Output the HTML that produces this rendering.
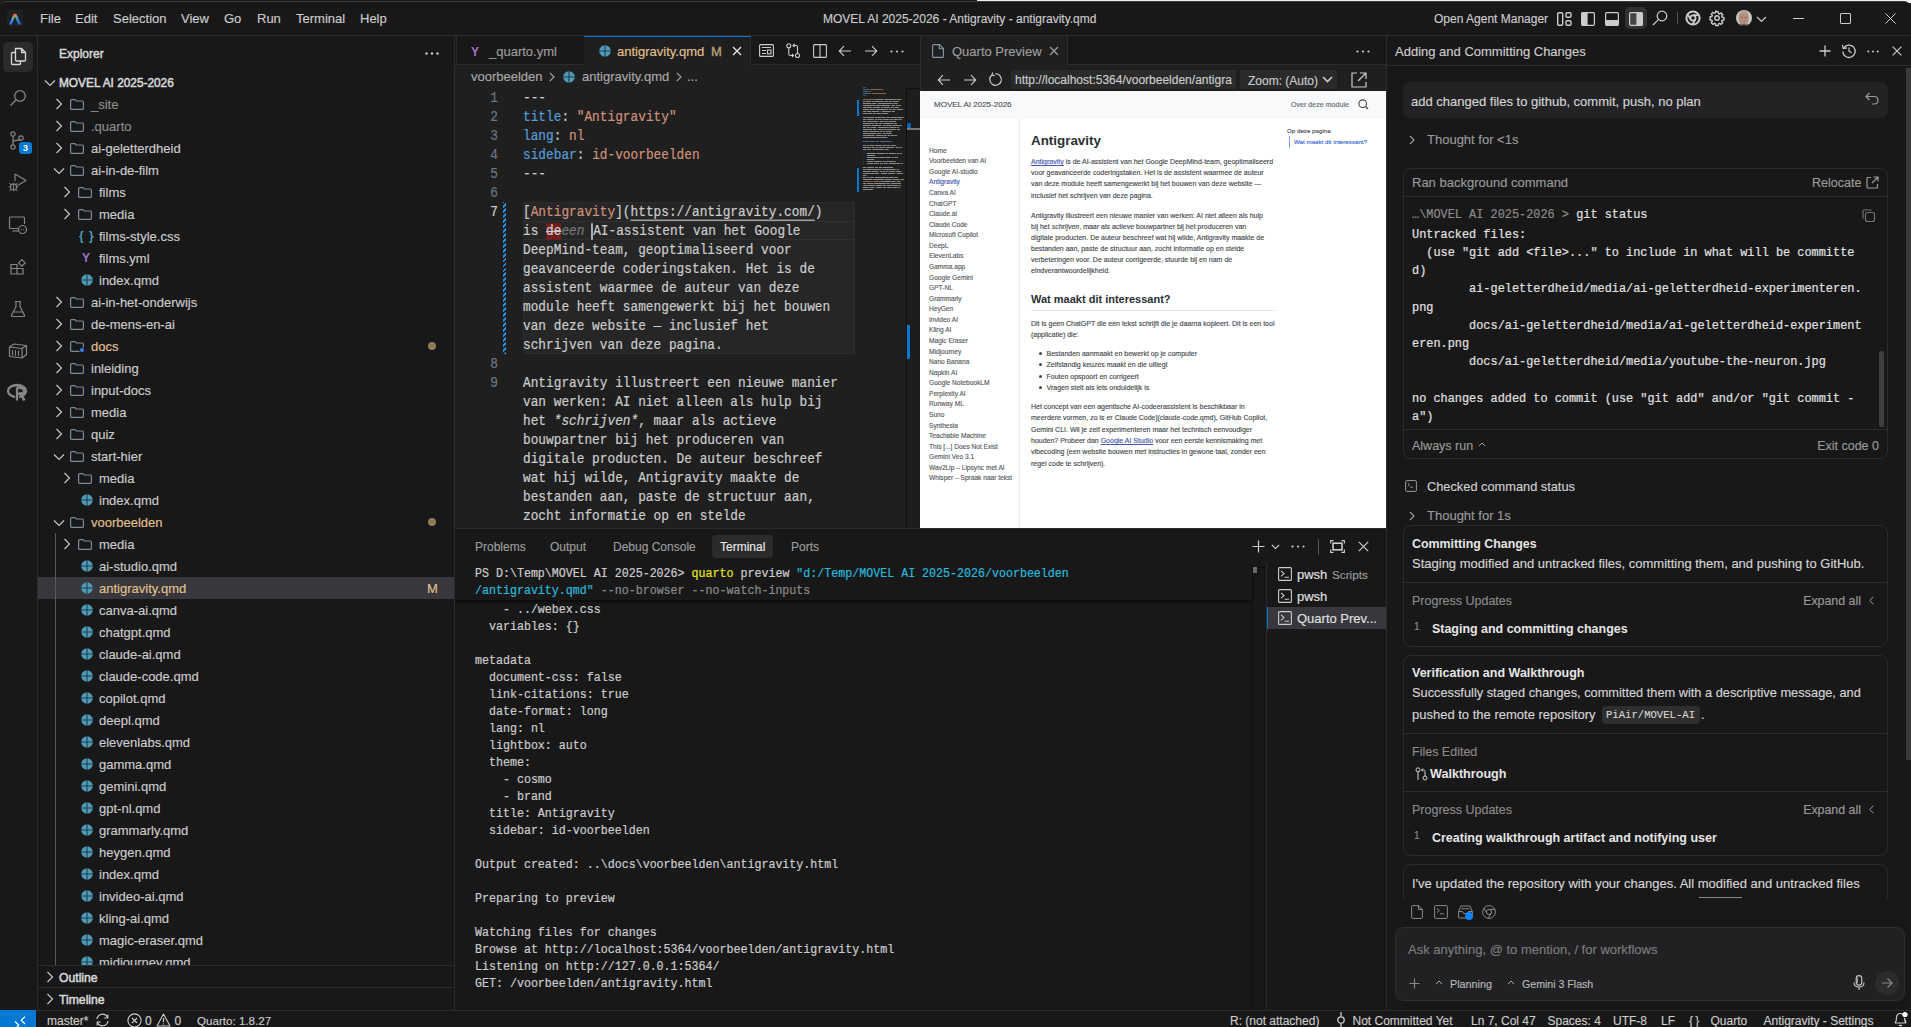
<!DOCTYPE html>
<html><head><meta charset="utf-8">
<style>
*{box-sizing:border-box;margin:0;padding:0}
html,body{width:1911px;height:1027px;overflow:hidden;background:#181818}
body{font-family:"Liberation Sans",sans-serif;font-size:13px;color:#cccccc;position:relative}
.a{position:absolute}
.t{position:absolute;white-space:pre;line-height:16px;-webkit-text-stroke:0.15px currentColor}
.mono{font-family:"Liberation Mono",monospace}
svg{position:absolute;overflow:visible}
.t[style*="font-weight:bold"]{-webkit-text-stroke:0}
</style></head><body>
<!-- top strip behind window -->
<div class="a" style="left:0;top:0;width:977px;height:3px;background:#1b1913"></div>
<div class="a" style="left:977px;top:0;width:934px;height:3px;background:#f0f0f0"></div>
<div class="a" style="left:0;top:1px;width:1911px;height:1026px;background:#181818;border-radius:5px 7px 0 0;border-top:1px solid #3d3c38"></div>

<!-- TITLE BAR -->
<div id="titlebar" class="a" style="left:0;top:3px;width:1911px;height:32px">
<div class="a" style="left:7px;top:7px;width:16px;height:16px;background:#202125"></div>
<svg style="left:7px;top:7px" width="16" height="16" viewBox="0 0 16 16"><defs><linearGradient id="lg" x1="0.3" y1="0" x2="0.5" y2="1"><stop offset="0.1" stop-color="#e8683a"/><stop offset="0.28" stop-color="#8fb04e"/><stop offset="0.5" stop-color="#3d90f8"/><stop offset="1" stop-color="#3170d8"/></linearGradient></defs><path d="M3.6 13.4 C5.2 11 6 8.2 6.9 5.9 C7.5 4.2 8.5 4.2 9.1 5.9 C10 8.2 10.8 11 12.4 13.4" fill="none" stroke="url(#lg)" stroke-width="2.5" stroke-linecap="round"/></svg>
<div class="t" style="left:40px;top:8px;color:#cccccc">File</div>
<div class="t" style="left:75px;top:8px;color:#cccccc">Edit</div>
<div class="t" style="left:113px;top:8px;color:#cccccc">Selection</div>
<div class="t" style="left:181px;top:8px;color:#cccccc">View</div>
<div class="t" style="left:224px;top:8px;color:#cccccc">Go</div>
<div class="t" style="left:257px;top:8px;color:#cccccc">Run</div>
<div class="t" style="left:296px;top:8px;color:#cccccc">Terminal</div>
<div class="t" style="left:360px;top:8px;color:#cccccc">Help</div>
<div class="t" style="left:823px;top:8px;color:#cccccc;font-size:12px;letter-spacing:0px">MOVEL AI 2025-2026 - Antigravity - antigravity.qmd</div>
<div class="t" style="left:1434px;top:8px;color:#cccccc;font-size:12px">Open Agent Manager</div>
<svg style="left:1557px;top:9px" width="15" height="14" viewBox="0 0 15 14"><rect x="0.7" y="0.7" width="5" height="12.6" rx="1.2" fill="none" stroke="#ccc" stroke-width="1.4"/><rect x="9" y="0.7" width="5" height="4.6" rx="1.2" fill="none" stroke="#ccc" stroke-width="1.4"/><rect x="9" y="8.7" width="5" height="4.6" rx="1.2" fill="none" stroke="#ccc" stroke-width="1.4"/></svg>
<svg style="left:1581px;top:9px" width="14" height="14" viewBox="0 0 14 14"><rect x="0.6" y="0.6" width="12.8" height="12.8" rx="1.2" fill="none" stroke="#ccc" stroke-width="1.2"/><rect x="0.6" y="0.6" width="6" height="12.8" fill="#ccc"/></svg>
<svg style="left:1605px;top:9px" width="14" height="14" viewBox="0 0 14 14"><rect x="0.6" y="0.6" width="12.8" height="12.8" rx="1.2" fill="none" stroke="#ccc" stroke-width="1.2"/><rect x="0.6" y="8" width="12.8" height="5.4" fill="#ccc"/></svg>
<div class="a" style="left:1625px;top:4px;width:22px;height:22px;border-radius:5px;background:#313131"></div>
<svg style="left:1629px;top:9px" width="14" height="14" viewBox="0 0 14 14"><rect x="0.6" y="0.6" width="12.8" height="12.8" rx="1.2" fill="#444" stroke="#ccc" stroke-width="1.2"/><rect x="7.4" y="0.6" width="6" height="12.8" fill="#ccc"/></svg>
<svg style="left:1652px;top:7px" width="16" height="16" viewBox="0 0 16 16"><circle cx="10" cy="6" r="4.8" fill="none" stroke="#ccc" stroke-width="1.2"/><path d="M6.6 9.4 L1 15" stroke="#ccc" stroke-width="1.3"/></svg>
<div class="a" style="left:1677px;top:9px;width:1px;height:12px;background:#555"></div>
<svg style="left:1685px;top:7px" width="16" height="16" viewBox="0 0 16 16"><circle cx="8" cy="8" r="6.6" fill="none" stroke="#ccc" stroke-width="2"/><circle cx="8" cy="8" r="2.6" fill="none" stroke="#ccc" stroke-width="1.7"/><path d="M8 5.2 H14.4 M5.6 9.4 L2.4 3.9 M10.4 9.4 L7.2 14.9" stroke="#ccc" stroke-width="1.8"/></svg>
<svg style="left:1709px;top:7px" width="16" height="16" viewBox="0 0 16 16"><path d="M8 1.5l1.2.3.3 1.7 1.1.5 1.4-1 1.7 1.7-1 1.4.5 1.1 1.7.3v2.4l-1.7.3-.5 1.1 1 1.4-1.7 1.7-1.4-1-1.1.5-.3 1.7H6.8l-.3-1.7-1.1-.5-1.4 1-1.7-1.7 1-1.4-.5-1.1-1.7-.3V6.8l1.7-.3.5-1.1-1-1.4 1.7-1.7 1.4 1 1.1-.5.3-1.7z" fill="none" stroke="#ccc" stroke-width="1.4"/><circle cx="8" cy="8" r="2.2" fill="none" stroke="#ccc" stroke-width="1.4"/></svg>
<svg style="left:1736px;top:7px" width="16" height="16" viewBox="0 0 16 16"><defs><clipPath id="avc"><circle cx="8" cy="8" r="8"/></clipPath></defs><g clip-path="url(#avc)"><rect width="16" height="16" fill="#c3cbc3"/><ellipse cx="7.6" cy="8.6" rx="5.2" ry="7.4" fill="#b58f7e"/><path d="M3 5 Q4 0.5 8 0.6 Q12 0.5 12.6 5 Q11 2.6 8 2.8 Q5 2.6 3 5Z" fill="#a9a49c"/><path d="M4.8 7.6 H6.8 M8.6 7.6 H10.6" stroke="#6e5446" stroke-width="0.9"/><path d="M6.8 12.2 H9" stroke="#9a6a66" stroke-width="0.8"/><rect x="3" y="14.5" width="10" height="2" fill="#2c2a2a"/></g></svg>
<svg style="left:1756px;top:13px" width="11" height="7" viewBox="0 0 11 7"><path d="M1 1 L5.5 5.5 L10 1" fill="none" stroke="#ccc" stroke-width="1.2"/></svg>
<div class="a" style="left:1793px;top:15px;width:11px;height:1px;background:#ccc"></div>
<div class="a" style="left:1840px;top:10px;width:11px;height:11px;border:1px solid #ccc;border-radius:1px"></div>
<svg style="left:1885px;top:10px" width="11" height="11" viewBox="0 0 11 11"><path d="M0.5 0.5 L10.5 10.5 M10.5 0.5 L0.5 10.5" stroke="#ccc" stroke-width="1"/></svg>
</div>
<div class="a" style="left:0;top:35px;width:1911px;height:1px;background:#2b2b2b"></div>

<!-- ACTIVITY BAR -->
<div id="activity" class="a" style="left:0;top:36px;width:38px;height:974px;background:#181818;border-right:1px solid #2b2b2b">
<div class="a" style="left:3px;top:6px;width:30px;height:30px;border-radius:5px;background:#2b2b2b"></div>
<svg style="left:9px;top:11px" width="19" height="19" viewBox="0 0 19 19"><path d="M6.5 1.5 H12.5 L16.5 5.5 V13 Q16.5 14 15.5 14 H7.5 Q6.5 14 6.5 13 Z M12.5 1.5 V5.5 H16.5" fill="none" stroke="#d7d7d7" stroke-width="1.3" stroke-linejoin="round"/><path d="M6.5 5.5 H3.5 Q2.5 5.5 2.5 6.5 V16.5 Q2.5 17.5 3.5 17.5 H10.5 Q11.5 17.5 11.5 16.5 V14" fill="none" stroke="#d7d7d7" stroke-width="1.3"/></svg>
<svg style="left:9px;top:53px" width="18" height="18" viewBox="0 0 18 18"><circle cx="11" cy="7" r="5.3" fill="none" stroke="#858585" stroke-width="1.3"/><path d="M7.2 10.8 L1.5 16.5" stroke="#858585" stroke-width="1.4"/></svg>
<svg style="left:9px;top:95px" width="18" height="20" viewBox="0 0 18 20"><circle cx="4" cy="3" r="2.2" fill="none" stroke="#858585" stroke-width="1.2"/><circle cx="4" cy="16" r="2.2" fill="none" stroke="#858585" stroke-width="1.2"/><circle cx="12" cy="7" r="2.2" fill="none" stroke="#858585" stroke-width="1.2"/><path d="M4 5.2 V13.8 M4 12 Q4 9.5 7 9.3 Q11.5 9.2 12 9.2" fill="none" stroke="#858585" stroke-width="1.2"/></svg>
<div class="a" style="left:19px;top:106px;width:13px;height:12px;border-radius:3px;background:#0078d4;color:#fff;font-size:9.5px;font-weight:bold;line-height:12px;text-align:center">3</div>
<svg style="left:8px;top:136px" width="20" height="20" viewBox="0 0 20 20"><path d="M7 2 L18 8.5 L9.5 13.5" fill="none" stroke="#858585" stroke-width="1.2" stroke-linejoin="round"/><path d="M7 2 V9" stroke="#858585" stroke-width="1.2"/><ellipse cx="5.5" cy="15" rx="3" ry="3.2" fill="none" stroke="#858585" stroke-width="1.2"/><path d="M2.5 15 H0.8 M8.5 15 H10.2 M3 12.5 L1.3 11.3 M8 12.5 L9.7 11.3 M3 17.5 L1.3 18.8 M8 17.5 L9.7 18.8 M5.5 12 V18" stroke="#858585" stroke-width="1"/></svg>
<svg style="left:8px;top:179px" width="20" height="20" viewBox="0 0 20 20"><path d="M11 13.5 H2.5 Q1.5 13.5 1.5 12.5 V3 Q1.5 2 2.5 2 H15.5 Q16.5 2 16.5 3 V9" fill="none" stroke="#858585" stroke-width="1.2"/><path d="M4.5 16 H10" stroke="#858585" stroke-width="1.2"/><circle cx="14.5" cy="14.5" r="4" fill="#181818" stroke="#858585" stroke-width="1.2"/><path d="M12.8 15.2 L14 13.8 M15 15.2 L16.2 13.8" stroke="#858585" stroke-width="0.9"/></svg>
<svg style="left:9px;top:222px" width="18" height="18" viewBox="0 0 18 18"><path d="M2 6.5 H8 V16 H2 Z M8 10.5 H14 V16 H8 Z M2 10.5 H8" fill="none" stroke="#858585" stroke-width="1.2"/><path d="M9.6 4.9 L12.9 1.6 L16.2 4.9 L12.9 8.2 Z" fill="none" stroke="#858585" stroke-width="1.2"/></svg>
<svg style="left:9px;top:264px" width="18" height="18" viewBox="0 0 18 18"><path d="M6 1.5 H12 M7 1.5 V6.5 L2.5 15.2 Q2.2 16.5 3.5 16.5 H14.5 Q15.8 16.5 15.5 15.2 L11 6.5 V1.5 M4.3 12 H13.7" fill="none" stroke="#858585" stroke-width="1.2" stroke-linejoin="round"/></svg>
<svg style="left:8px;top:306px" width="20" height="18" viewBox="0 0 20 18"><path d="M1.5 5 L6 2 L18.5 3.5 V12.5 L14 16 L1.5 14.5 Z M1.5 5 L14 6.5 L18.5 3.5 M14 6.5 V16" fill="none" stroke="#858585" stroke-width="1.2" stroke-linejoin="round"/><path d="M4.5 8 V13.5 M7.5 8.3 V13.8 M10.5 8.6 V14.2" stroke="#858585" stroke-width="1.1"/></svg>
<svg style="left:7px;top:347px" width="22" height="18" viewBox="0 0 22 18"><ellipse cx="10" cy="8" rx="9" ry="6" fill="none" stroke="#858585" stroke-width="2.4"/><path d="M8.5 5 H14 Q17 5 17 8 Q17 10.5 14 10.5 H10.5 M10.5 5 V17 M13.5 10.5 L17 17" fill="none" stroke="#858585" stroke-width="2.4"/><rect x="8" y="4" width="4" height="14" fill="#181818"/><path d="M10 4.5 V17.5 M10 4.5 H14.5 Q17.5 4.5 17.5 7.7 Q17.5 10.8 14.5 10.8 H10 M13.8 10.8 L17.5 17.5" fill="none" stroke="#858585" stroke-width="2.3"/></svg>
</div>
<!-- SIDEBAR -->
<div id="sidebar" class="a" style="left:38px;top:36px;width:417px;height:974px;background:#181818;border-right:1px solid #2b2b2b;overflow:hidden">
<div class="t" style="left:21px;top:10px;color:#d8d8d8;font-size:12px;-webkit-text-stroke:0.45px currentColor">Explorer</div>
<svg style="left:387px;top:16px" width="14" height="3" viewBox="0 0 14 3"><circle cx="1.5" cy="1.5" r="1.2" fill="#ccc"/><circle cx="7" cy="1.5" r="1.2" fill="#ccc"/><circle cx="12.5" cy="1.5" r="1.2" fill="#ccc"/></svg>
<svg style="left:6px;top:43px" width="12" height="8" viewBox="0 0 12 8"><path d="M1 1.5 L6 6.5 L11 1.5" fill="none" stroke="#c5c5c5" stroke-width="1.2"/></svg>
<div class="t" style="left:21px;top:39px;color:#d8d8d8;font-size:11.85px;-webkit-text-stroke:0.5px currentColor;transform:scaleY(1.06)">MOVEL AI 2025-2026</div>
<svg style="left:17px;top:62px" width="8" height="12" viewBox="0 0 8 12"><path d="M1.5 1 L6.5 6 L1.5 11" fill="none" stroke="#c5c5c5" stroke-width="1.2"/></svg>
<svg style="left:32px;top:63px" width="14" height="11" viewBox="0 0 14 11"><path d="M0.6 1.6 Q0.6 0.6 1.6 0.6 H5 L6.3 2 H12.4 Q13.4 2 13.4 3 V9.4 Q13.4 10.4 12.4 10.4 H1.6 Q0.6 10.4 0.6 9.4 Z" fill="none" stroke="#7d8898" stroke-width="1.2" stroke-linejoin="round"/></svg>
<div class="t" style="left:53px;top:61px;color:#8c8c8c;">_site</div>
<svg style="left:17px;top:84px" width="8" height="12" viewBox="0 0 8 12"><path d="M1.5 1 L6.5 6 L1.5 11" fill="none" stroke="#c5c5c5" stroke-width="1.2"/></svg>
<svg style="left:32px;top:85px" width="14" height="11" viewBox="0 0 14 11"><path d="M0.6 1.6 Q0.6 0.6 1.6 0.6 H5 L6.3 2 H12.4 Q13.4 2 13.4 3 V9.4 Q13.4 10.4 12.4 10.4 H1.6 Q0.6 10.4 0.6 9.4 Z" fill="none" stroke="#7d8898" stroke-width="1.2" stroke-linejoin="round"/></svg>
<div class="t" style="left:53px;top:83px;color:#8c8c8c;">.quarto</div>
<svg style="left:17px;top:106px" width="8" height="12" viewBox="0 0 8 12"><path d="M1.5 1 L6.5 6 L1.5 11" fill="none" stroke="#c5c5c5" stroke-width="1.2"/></svg>
<svg style="left:32px;top:107px" width="14" height="11" viewBox="0 0 14 11"><path d="M0.6 1.6 Q0.6 0.6 1.6 0.6 H5 L6.3 2 H12.4 Q13.4 2 13.4 3 V9.4 Q13.4 10.4 12.4 10.4 H1.6 Q0.6 10.4 0.6 9.4 Z" fill="none" stroke="#7d8898" stroke-width="1.2" stroke-linejoin="round"/></svg>
<div class="t" style="left:53px;top:105px;color:#cccccc;">ai-geletterdheid</div>
<svg style="left:15px;top:131px" width="12" height="8" viewBox="0 0 12 8"><path d="M1 1.5 L6 6.5 L11 1.5" fill="none" stroke="#c5c5c5" stroke-width="1.2"/></svg>
<svg style="left:32px;top:129px" width="14" height="11" viewBox="0 0 14 11"><path d="M0.6 1.6 Q0.6 0.6 1.6 0.6 H5 L6.3 2 H12.4 Q13.4 2 13.4 3 V9.4 Q13.4 10.4 12.4 10.4 H1.6 Q0.6 10.4 0.6 9.4 Z" fill="none" stroke="#7d8898" stroke-width="1.2" stroke-linejoin="round"/></svg>
<div class="t" style="left:53px;top:127px;color:#cccccc;">ai-in-de-film</div>
<svg style="left:25px;top:150px" width="8" height="12" viewBox="0 0 8 12"><path d="M1.5 1 L6.5 6 L1.5 11" fill="none" stroke="#c5c5c5" stroke-width="1.2"/></svg>
<svg style="left:40px;top:151px" width="14" height="11" viewBox="0 0 14 11"><path d="M0.6 1.6 Q0.6 0.6 1.6 0.6 H5 L6.3 2 H12.4 Q13.4 2 13.4 3 V9.4 Q13.4 10.4 12.4 10.4 H1.6 Q0.6 10.4 0.6 9.4 Z" fill="none" stroke="#7d8898" stroke-width="1.2" stroke-linejoin="round"/></svg>
<div class="t" style="left:61px;top:149px;color:#cccccc;">films</div>
<svg style="left:25px;top:172px" width="8" height="12" viewBox="0 0 8 12"><path d="M1.5 1 L6.5 6 L1.5 11" fill="none" stroke="#c5c5c5" stroke-width="1.2"/></svg>
<svg style="left:40px;top:173px" width="14" height="11" viewBox="0 0 14 11"><path d="M0.6 1.6 Q0.6 0.6 1.6 0.6 H5 L6.3 2 H12.4 Q13.4 2 13.4 3 V9.4 Q13.4 10.4 12.4 10.4 H1.6 Q0.6 10.4 0.6 9.4 Z" fill="none" stroke="#7d8898" stroke-width="1.2" stroke-linejoin="round"/></svg>
<div class="t" style="left:61px;top:171px;color:#cccccc;">media</div>
<div class="t" style="left:41px;top:194px;color:#519aba;font-size:12px;line-height:12px;font-weight:bold;letter-spacing:1px">{ }</div>
<div class="t" style="left:61px;top:193px;color:#cccccc;">films-style.css</div>
<div class="t" style="left:44px;top:216px;color:#a074c4;font-size:12px;line-height:12px;font-weight:bold">Y</div>
<div class="t" style="left:61px;top:215px;color:#cccccc;">films.yml</div>
<svg style="left:43px;top:238px" width="12" height="12" viewBox="0 0 12 12"><circle cx="6" cy="6" r="5.8" fill="#519aba"/><path d="M6 0 V12 M0 6 H12" stroke="#1f3f4d" stroke-width="1.1"/></svg>
<div class="t" style="left:61px;top:237px;color:#cccccc;">index.qmd</div>
<svg style="left:17px;top:260px" width="8" height="12" viewBox="0 0 8 12"><path d="M1.5 1 L6.5 6 L1.5 11" fill="none" stroke="#c5c5c5" stroke-width="1.2"/></svg>
<svg style="left:32px;top:261px" width="14" height="11" viewBox="0 0 14 11"><path d="M0.6 1.6 Q0.6 0.6 1.6 0.6 H5 L6.3 2 H12.4 Q13.4 2 13.4 3 V9.4 Q13.4 10.4 12.4 10.4 H1.6 Q0.6 10.4 0.6 9.4 Z" fill="none" stroke="#7d8898" stroke-width="1.2" stroke-linejoin="round"/></svg>
<div class="t" style="left:53px;top:259px;color:#cccccc;">ai-in-het-onderwijs</div>
<svg style="left:17px;top:282px" width="8" height="12" viewBox="0 0 8 12"><path d="M1.5 1 L6.5 6 L1.5 11" fill="none" stroke="#c5c5c5" stroke-width="1.2"/></svg>
<svg style="left:32px;top:283px" width="14" height="11" viewBox="0 0 14 11"><path d="M0.6 1.6 Q0.6 0.6 1.6 0.6 H5 L6.3 2 H12.4 Q13.4 2 13.4 3 V9.4 Q13.4 10.4 12.4 10.4 H1.6 Q0.6 10.4 0.6 9.4 Z" fill="none" stroke="#7d8898" stroke-width="1.2" stroke-linejoin="round"/></svg>
<div class="t" style="left:53px;top:281px;color:#cccccc;">de-mens-en-ai</div>
<svg style="left:17px;top:304px" width="8" height="12" viewBox="0 0 8 12"><path d="M1.5 1 L6.5 6 L1.5 11" fill="none" stroke="#c5c5c5" stroke-width="1.2"/></svg>
<svg style="left:32px;top:305px" width="14" height="11" viewBox="0 0 14 11"><path d="M0.6 1.6 Q0.6 0.6 1.6 0.6 H5 L6.3 2 H12.4 Q13.4 2 13.4 3 V9.4 Q13.4 10.4 12.4 10.4 H1.6 Q0.6 10.4 0.6 9.4 Z" fill="none" stroke="#7d8898" stroke-width="1.2" stroke-linejoin="round"/></svg><div class="a" style="left:41px;top:311px;width:6px;height:6px;border-radius:50%;background:#3b82f6;border:1px solid #181818"></div>
<div class="t" style="left:53px;top:303px;color:#e2c08d;">docs</div>
<div class="a" style="left:390px;top:306px;width:8px;height:8px;border-radius:50%;background:#8a7a5a"></div>
<svg style="left:17px;top:326px" width="8" height="12" viewBox="0 0 8 12"><path d="M1.5 1 L6.5 6 L1.5 11" fill="none" stroke="#c5c5c5" stroke-width="1.2"/></svg>
<svg style="left:32px;top:327px" width="14" height="11" viewBox="0 0 14 11"><path d="M0.6 1.6 Q0.6 0.6 1.6 0.6 H5 L6.3 2 H12.4 Q13.4 2 13.4 3 V9.4 Q13.4 10.4 12.4 10.4 H1.6 Q0.6 10.4 0.6 9.4 Z" fill="none" stroke="#7d8898" stroke-width="1.2" stroke-linejoin="round"/></svg>
<div class="t" style="left:53px;top:325px;color:#cccccc;">inleiding</div>
<svg style="left:17px;top:348px" width="8" height="12" viewBox="0 0 8 12"><path d="M1.5 1 L6.5 6 L1.5 11" fill="none" stroke="#c5c5c5" stroke-width="1.2"/></svg>
<svg style="left:32px;top:349px" width="14" height="11" viewBox="0 0 14 11"><path d="M0.6 1.6 Q0.6 0.6 1.6 0.6 H5 L6.3 2 H12.4 Q13.4 2 13.4 3 V9.4 Q13.4 10.4 12.4 10.4 H1.6 Q0.6 10.4 0.6 9.4 Z" fill="none" stroke="#7d8898" stroke-width="1.2" stroke-linejoin="round"/></svg>
<div class="t" style="left:53px;top:347px;color:#cccccc;">input-docs</div>
<svg style="left:17px;top:370px" width="8" height="12" viewBox="0 0 8 12"><path d="M1.5 1 L6.5 6 L1.5 11" fill="none" stroke="#c5c5c5" stroke-width="1.2"/></svg>
<svg style="left:32px;top:371px" width="14" height="11" viewBox="0 0 14 11"><path d="M0.6 1.6 Q0.6 0.6 1.6 0.6 H5 L6.3 2 H12.4 Q13.4 2 13.4 3 V9.4 Q13.4 10.4 12.4 10.4 H1.6 Q0.6 10.4 0.6 9.4 Z" fill="none" stroke="#7d8898" stroke-width="1.2" stroke-linejoin="round"/></svg>
<div class="t" style="left:53px;top:369px;color:#cccccc;">media</div>
<svg style="left:17px;top:392px" width="8" height="12" viewBox="0 0 8 12"><path d="M1.5 1 L6.5 6 L1.5 11" fill="none" stroke="#c5c5c5" stroke-width="1.2"/></svg>
<svg style="left:32px;top:393px" width="14" height="11" viewBox="0 0 14 11"><path d="M0.6 1.6 Q0.6 0.6 1.6 0.6 H5 L6.3 2 H12.4 Q13.4 2 13.4 3 V9.4 Q13.4 10.4 12.4 10.4 H1.6 Q0.6 10.4 0.6 9.4 Z" fill="none" stroke="#7d8898" stroke-width="1.2" stroke-linejoin="round"/></svg>
<div class="t" style="left:53px;top:391px;color:#cccccc;">quiz</div>
<svg style="left:15px;top:417px" width="12" height="8" viewBox="0 0 12 8"><path d="M1 1.5 L6 6.5 L11 1.5" fill="none" stroke="#c5c5c5" stroke-width="1.2"/></svg>
<svg style="left:32px;top:415px" width="14" height="11" viewBox="0 0 14 11"><path d="M0.6 1.6 Q0.6 0.6 1.6 0.6 H5 L6.3 2 H12.4 Q13.4 2 13.4 3 V9.4 Q13.4 10.4 12.4 10.4 H1.6 Q0.6 10.4 0.6 9.4 Z" fill="none" stroke="#7d8898" stroke-width="1.2" stroke-linejoin="round"/></svg>
<div class="t" style="left:53px;top:413px;color:#cccccc;">start-hier</div>
<svg style="left:25px;top:436px" width="8" height="12" viewBox="0 0 8 12"><path d="M1.5 1 L6.5 6 L1.5 11" fill="none" stroke="#c5c5c5" stroke-width="1.2"/></svg>
<svg style="left:40px;top:437px" width="14" height="11" viewBox="0 0 14 11"><path d="M0.6 1.6 Q0.6 0.6 1.6 0.6 H5 L6.3 2 H12.4 Q13.4 2 13.4 3 V9.4 Q13.4 10.4 12.4 10.4 H1.6 Q0.6 10.4 0.6 9.4 Z" fill="none" stroke="#7d8898" stroke-width="1.2" stroke-linejoin="round"/></svg>
<div class="t" style="left:61px;top:435px;color:#cccccc;">media</div>
<svg style="left:43px;top:458px" width="12" height="12" viewBox="0 0 12 12"><circle cx="6" cy="6" r="5.8" fill="#519aba"/><path d="M6 0 V12 M0 6 H12" stroke="#1f3f4d" stroke-width="1.1"/></svg>
<div class="t" style="left:61px;top:457px;color:#cccccc;">index.qmd</div>
<svg style="left:15px;top:483px" width="12" height="8" viewBox="0 0 12 8"><path d="M1 1.5 L6 6.5 L11 1.5" fill="none" stroke="#c5c5c5" stroke-width="1.2"/></svg>
<svg style="left:32px;top:481px" width="14" height="11" viewBox="0 0 14 11"><path d="M0.6 1.6 Q0.6 0.6 1.6 0.6 H5 L6.3 2 H12.4 Q13.4 2 13.4 3 V9.4 Q13.4 10.4 12.4 10.4 H1.6 Q0.6 10.4 0.6 9.4 Z" fill="none" stroke="#7d8898" stroke-width="1.2" stroke-linejoin="round"/></svg>
<div class="t" style="left:53px;top:479px;color:#e2c08d;">voorbeelden</div>
<div class="a" style="left:390px;top:482px;width:8px;height:8px;border-radius:50%;background:#8a7a5a"></div>
<svg style="left:25px;top:502px" width="8" height="12" viewBox="0 0 8 12"><path d="M1.5 1 L6.5 6 L1.5 11" fill="none" stroke="#c5c5c5" stroke-width="1.2"/></svg>
<svg style="left:40px;top:503px" width="14" height="11" viewBox="0 0 14 11"><path d="M0.6 1.6 Q0.6 0.6 1.6 0.6 H5 L6.3 2 H12.4 Q13.4 2 13.4 3 V9.4 Q13.4 10.4 12.4 10.4 H1.6 Q0.6 10.4 0.6 9.4 Z" fill="none" stroke="#7d8898" stroke-width="1.2" stroke-linejoin="round"/></svg>
<div class="t" style="left:61px;top:501px;color:#cccccc;">media</div>
<svg style="left:43px;top:524px" width="12" height="12" viewBox="0 0 12 12"><circle cx="6" cy="6" r="5.8" fill="#519aba"/><path d="M6 0 V12 M0 6 H12" stroke="#1f3f4d" stroke-width="1.1"/></svg>
<div class="t" style="left:61px;top:523px;color:#cccccc;">ai-studio.qmd</div>
<div class="a" style="left:0;top:541px;width:416px;height:22px;background:#37373d"></div>
<svg style="left:43px;top:546px" width="12" height="12" viewBox="0 0 12 12"><circle cx="6" cy="6" r="5.8" fill="#519aba"/><path d="M6 0 V12 M0 6 H12" stroke="#1f3f4d" stroke-width="1.1"/></svg>
<div class="t" style="left:61px;top:545px;color:#e2c08d;">antigravity.qmd</div>
<div class="t" style="left:389px;top:545px;color:#e2c08d;">M</div>
<svg style="left:43px;top:568px" width="12" height="12" viewBox="0 0 12 12"><circle cx="6" cy="6" r="5.8" fill="#519aba"/><path d="M6 0 V12 M0 6 H12" stroke="#1f3f4d" stroke-width="1.1"/></svg>
<div class="t" style="left:61px;top:567px;color:#cccccc;">canva-ai.qmd</div>
<svg style="left:43px;top:590px" width="12" height="12" viewBox="0 0 12 12"><circle cx="6" cy="6" r="5.8" fill="#519aba"/><path d="M6 0 V12 M0 6 H12" stroke="#1f3f4d" stroke-width="1.1"/></svg>
<div class="t" style="left:61px;top:589px;color:#cccccc;">chatgpt.qmd</div>
<svg style="left:43px;top:612px" width="12" height="12" viewBox="0 0 12 12"><circle cx="6" cy="6" r="5.8" fill="#519aba"/><path d="M6 0 V12 M0 6 H12" stroke="#1f3f4d" stroke-width="1.1"/></svg>
<div class="t" style="left:61px;top:611px;color:#cccccc;">claude-ai.qmd</div>
<svg style="left:43px;top:634px" width="12" height="12" viewBox="0 0 12 12"><circle cx="6" cy="6" r="5.8" fill="#519aba"/><path d="M6 0 V12 M0 6 H12" stroke="#1f3f4d" stroke-width="1.1"/></svg>
<div class="t" style="left:61px;top:633px;color:#cccccc;">claude-code.qmd</div>
<svg style="left:43px;top:656px" width="12" height="12" viewBox="0 0 12 12"><circle cx="6" cy="6" r="5.8" fill="#519aba"/><path d="M6 0 V12 M0 6 H12" stroke="#1f3f4d" stroke-width="1.1"/></svg>
<div class="t" style="left:61px;top:655px;color:#cccccc;">copilot.qmd</div>
<svg style="left:43px;top:678px" width="12" height="12" viewBox="0 0 12 12"><circle cx="6" cy="6" r="5.8" fill="#519aba"/><path d="M6 0 V12 M0 6 H12" stroke="#1f3f4d" stroke-width="1.1"/></svg>
<div class="t" style="left:61px;top:677px;color:#cccccc;">deepl.qmd</div>
<svg style="left:43px;top:700px" width="12" height="12" viewBox="0 0 12 12"><circle cx="6" cy="6" r="5.8" fill="#519aba"/><path d="M6 0 V12 M0 6 H12" stroke="#1f3f4d" stroke-width="1.1"/></svg>
<div class="t" style="left:61px;top:699px;color:#cccccc;">elevenlabs.qmd</div>
<svg style="left:43px;top:722px" width="12" height="12" viewBox="0 0 12 12"><circle cx="6" cy="6" r="5.8" fill="#519aba"/><path d="M6 0 V12 M0 6 H12" stroke="#1f3f4d" stroke-width="1.1"/></svg>
<div class="t" style="left:61px;top:721px;color:#cccccc;">gamma.qmd</div>
<svg style="left:43px;top:744px" width="12" height="12" viewBox="0 0 12 12"><circle cx="6" cy="6" r="5.8" fill="#519aba"/><path d="M6 0 V12 M0 6 H12" stroke="#1f3f4d" stroke-width="1.1"/></svg>
<div class="t" style="left:61px;top:743px;color:#cccccc;">gemini.qmd</div>
<svg style="left:43px;top:766px" width="12" height="12" viewBox="0 0 12 12"><circle cx="6" cy="6" r="5.8" fill="#519aba"/><path d="M6 0 V12 M0 6 H12" stroke="#1f3f4d" stroke-width="1.1"/></svg>
<div class="t" style="left:61px;top:765px;color:#cccccc;">gpt-nl.qmd</div>
<svg style="left:43px;top:788px" width="12" height="12" viewBox="0 0 12 12"><circle cx="6" cy="6" r="5.8" fill="#519aba"/><path d="M6 0 V12 M0 6 H12" stroke="#1f3f4d" stroke-width="1.1"/></svg>
<div class="t" style="left:61px;top:787px;color:#cccccc;">grammarly.qmd</div>
<svg style="left:43px;top:810px" width="12" height="12" viewBox="0 0 12 12"><circle cx="6" cy="6" r="5.8" fill="#519aba"/><path d="M6 0 V12 M0 6 H12" stroke="#1f3f4d" stroke-width="1.1"/></svg>
<div class="t" style="left:61px;top:809px;color:#cccccc;">heygen.qmd</div>
<svg style="left:43px;top:832px" width="12" height="12" viewBox="0 0 12 12"><circle cx="6" cy="6" r="5.8" fill="#519aba"/><path d="M6 0 V12 M0 6 H12" stroke="#1f3f4d" stroke-width="1.1"/></svg>
<div class="t" style="left:61px;top:831px;color:#cccccc;">index.qmd</div>
<svg style="left:43px;top:854px" width="12" height="12" viewBox="0 0 12 12"><circle cx="6" cy="6" r="5.8" fill="#519aba"/><path d="M6 0 V12 M0 6 H12" stroke="#1f3f4d" stroke-width="1.1"/></svg>
<div class="t" style="left:61px;top:853px;color:#cccccc;">invideo-ai.qmd</div>
<svg style="left:43px;top:876px" width="12" height="12" viewBox="0 0 12 12"><circle cx="6" cy="6" r="5.8" fill="#519aba"/><path d="M6 0 V12 M0 6 H12" stroke="#1f3f4d" stroke-width="1.1"/></svg>
<div class="t" style="left:61px;top:875px;color:#cccccc;">kling-ai.qmd</div>
<svg style="left:43px;top:898px" width="12" height="12" viewBox="0 0 12 12"><circle cx="6" cy="6" r="5.8" fill="#519aba"/><path d="M6 0 V12 M0 6 H12" stroke="#1f3f4d" stroke-width="1.1"/></svg>
<div class="t" style="left:61px;top:897px;color:#cccccc;">magic-eraser.qmd</div>
<svg style="left:43px;top:920px" width="12" height="12" viewBox="0 0 12 12"><circle cx="6" cy="6" r="5.8" fill="#519aba"/><path d="M6 0 V12 M0 6 H12" stroke="#1f3f4d" stroke-width="1.1"/></svg>
<div class="t" style="left:61px;top:919px;color:#cccccc;">midjourney.qmd</div>
<div class="a" style="left:17px;top:497px;width:1px;height:432px;background:#585858"></div>
<div class="a" style="left:0;top:929px;width:416px;height:45px;background:#181818"></div>
<div class="a" style="left:0;top:929px;width:416px;height:1px;background:#2b2b2b"></div>
<div class="a" style="left:0;top:951px;width:416px;height:1px;background:#2b2b2b"></div>
<svg style="left:8px;top:935px" width="8" height="12" viewBox="0 0 8 12"><path d="M1.5 1 L6.5 6 L1.5 11" fill="none" stroke="#c5c5c5" stroke-width="1.2"/></svg>
<div class="t" style="left:21px;top:934px;color:#d8d8d8;font-size:12.2px;-webkit-text-stroke:0.5px currentColor">Outline</div>
<svg style="left:8px;top:957px" width="8" height="12" viewBox="0 0 8 12"><path d="M1.5 1 L6.5 6 L1.5 11" fill="none" stroke="#c5c5c5" stroke-width="1.2"/></svg>
<div class="t" style="left:21px;top:956px;color:#d8d8d8;font-size:12.2px;-webkit-text-stroke:0.5px currentColor">Timeline</div>
</div>
<!-- EDITOR GROUP 1 -->
<div id="ed1" class="a" style="left:455px;top:36px;width:465px;height:492px;background:#1f1f1f;overflow:hidden">
<div class="a" style="left:0;top:0;width:465px;height:29px;background:#181818"></div>
<div class="a" style="left:0;top:28px;width:465px;height:1px;background:#2b2b2b"></div>
<div class="a" style="left:1px;top:0;width:129px;height:28px;background:#181818;border-left:1px solid #2b2b2b;border-right:1px solid #2b2b2b"></div>
<div class="t" style="left:16px;top:8px;color:#a074c4;font-weight:bold;font-size:12px">Y</div>
<div class="t" style="left:34px;top:8px;color:#9d9d9d;">_quarto.yml</div>
<div class="a" style="left:129px;top:0;width:167px;height:29px;background:#1f1f1f;border-top:1px solid #0078d4;border-right:1px solid #2b2b2b"></div>
<svg style="left:144px;top:9px" width="12" height="12" viewBox="0 0 12 12"><circle cx="6" cy="6" r="5.8" fill="#519aba"/><path d="M6 0 V12 M0 6 H12" stroke="#1f3f4d" stroke-width="1.1"/></svg>
<div class="t" style="left:162px;top:8px;color:#e2c08d;">antigravity.qmd</div>
<div class="t" style="left:256px;top:8px;color:#b59e76;-webkit-text-stroke:0.4px currentColor">M</div>
<svg style="left:277px;top:10px" width="10" height="10" viewBox="0 0 10 10"><path d="M1 1 L9 9 M9 1 L1 9" stroke="#e0e0e0" stroke-width="1.4"/></svg>
<svg style="left:304px;top:8px" width="15" height="13" viewBox="0 0 15 13"><rect x="0.6" y="0.6" width="13.8" height="11.8" rx="1" fill="none" stroke="#cccccc" stroke-width="1.1"/><path d="M3 3.5 H12 M3 6.5 H7 M3 9.5 H7" stroke="#cccccc" stroke-width="1.1"/><rect x="8.5" y="6" width="3.5" height="3.8" fill="none" stroke="#cccccc" stroke-width="1.1"/></svg>
<svg style="left:331px;top:7px" width="15" height="16" viewBox="0 0 15 16"><circle cx="2.8" cy="2.8" r="2" fill="none" stroke="#cccccc" stroke-width="1.1"/><circle cx="11.5" cy="12.5" r="2" fill="none" stroke="#cccccc" stroke-width="1.1"/><path d="M2.8 4.8 V11 Q2.8 12.5 4.5 12.5 H7.5 M6 11 L7.5 12.5 L6 14 M11.5 10.5 V4 Q11.5 2.5 10 2.5 H7 M8.5 1 L7 2.5 L8.5 4" fill="none" stroke="#cccccc" stroke-width="1.1"/></svg>
<svg style="left:358px;top:8px" width="14" height="14" viewBox="0 0 14 14"><rect x="0.6" y="0.6" width="12.8" height="12.8" rx="1" fill="none" stroke="#cccccc" stroke-width="1.1"/><path d="M7 0.6 V13.4" stroke="#cccccc" stroke-width="1.1"/></svg>
<svg style="left:383px;top:9px" width="14" height="12" viewBox="0 0 14 12"><path d="M13 6 H1.5 M6 1.2 L1.2 6 L6 10.8" fill="none" stroke="#cccccc" stroke-width="1.1"/></svg>
<svg style="left:409px;top:9px" width="14" height="12" viewBox="0 0 14 12"><path d="M1 6 H12.5 M8 1.2 L12.8 6 L8 10.8" fill="none" stroke="#cccccc" stroke-width="1.1"/></svg>
<svg style="left:435px;top:14px" width="14" height="3" viewBox="0 0 14 3"><circle cx="1.5" cy="1.5" r="1.1" fill="#cccccc"/><circle cx="7" cy="1.5" r="1.1" fill="#cccccc"/><circle cx="12.5" cy="1.5" r="1.1" fill="#cccccc"/></svg>
<div class="t" style="left:16px;top:33px;color:#a9a9a9;">voorbeelden</div>
<svg style="left:94px;top:36px" width="6" height="10" viewBox="0 0 6 10"><path d="M0.8 0.8 L5 5 L0.8 9.2" fill="none" stroke="#a9a9a9" stroke-width="1.1"/></svg>
<svg style="left:108px;top:35px" width="12" height="12" viewBox="0 0 12 12"><circle cx="6" cy="6" r="5.8" fill="#519aba"/><path d="M6 0 V12 M0 6 H12" stroke="#1f3f4d" stroke-width="1.1"/></svg>
<div class="t" style="left:127px;top:33px;color:#a9a9a9;">antigravity.qmd</div>
<svg style="left:221px;top:36px" width="6" height="10" viewBox="0 0 6 10"><path d="M0.8 0.8 L5 5 L0.8 9.2" fill="none" stroke="#a9a9a9" stroke-width="1.1"/></svg>
<div class="t" style="left:232px;top:33px;color:#a9a9a9;">...</div>
<div class="a" style="left:68px;top:166px;width:332px;height:152px;background:#262626;border:1px solid #2c2c2c"></div>
<div class="a" style="left:68px;top:185px;width:332px;height:1px;background:#303030"></div>
<div class="a" style="left:68px;top:203px;width:332px;height:1px;background:#303030"></div>
<div class="a" style="left:48px;top:166px;width:3px;height:152px;background:repeating-linear-gradient(-45deg,#1d8fe0 0 2px,#1f1f1f 2px 3.5px)"></div>
<div class="t" style="left:15px;top:52.5px;width:28px;text-align:right;color:#6e7681;font-family:'Liberation Mono',monospace;font-size:12.8px;line-height:19px;transform:scaleY(1.1);-webkit-text-stroke:0.2px currentColor">1</div>
<div class="t" style="left:15px;top:71.5px;width:28px;text-align:right;color:#6e7681;font-family:'Liberation Mono',monospace;font-size:12.8px;line-height:19px;transform:scaleY(1.1);-webkit-text-stroke:0.2px currentColor">2</div>
<div class="t" style="left:15px;top:90.5px;width:28px;text-align:right;color:#6e7681;font-family:'Liberation Mono',monospace;font-size:12.8px;line-height:19px;transform:scaleY(1.1);-webkit-text-stroke:0.2px currentColor">3</div>
<div class="t" style="left:15px;top:109.5px;width:28px;text-align:right;color:#6e7681;font-family:'Liberation Mono',monospace;font-size:12.8px;line-height:19px;transform:scaleY(1.1);-webkit-text-stroke:0.2px currentColor">4</div>
<div class="t" style="left:15px;top:128.5px;width:28px;text-align:right;color:#6e7681;font-family:'Liberation Mono',monospace;font-size:12.8px;line-height:19px;transform:scaleY(1.1);-webkit-text-stroke:0.2px currentColor">5</div>
<div class="t" style="left:15px;top:147.5px;width:28px;text-align:right;color:#6e7681;font-family:'Liberation Mono',monospace;font-size:12.8px;line-height:19px;transform:scaleY(1.1);-webkit-text-stroke:0.2px currentColor">6</div>
<div class="t" style="left:15px;top:166.5px;width:28px;text-align:right;color:#cccccc;font-family:'Liberation Mono',monospace;font-size:12.8px;line-height:19px;transform:scaleY(1.1);-webkit-text-stroke:0.2px currentColor">7</div>
<div class="t" style="left:15px;top:318.5px;width:28px;text-align:right;color:#6e7681;font-family:'Liberation Mono',monospace;font-size:12.8px;line-height:19px;transform:scaleY(1.1);-webkit-text-stroke:0.2px currentColor">8</div>
<div class="t" style="left:15px;top:337.5px;width:28px;text-align:right;color:#6e7681;font-family:'Liberation Mono',monospace;font-size:12.8px;line-height:19px;transform:scaleY(1.1);-webkit-text-stroke:0.2px currentColor">9</div>
<div class="t" style="left:68px;top:52.5px;font-family:'Liberation Mono',monospace;font-size:12.8px;line-height:19px;transform:scaleY(1.1);-webkit-text-stroke:0.2px currentColor"><span style="color:#cccccc;">---</span></div>
<div class="t" style="left:68px;top:71.5px;font-family:'Liberation Mono',monospace;font-size:12.8px;line-height:19px;transform:scaleY(1.1);-webkit-text-stroke:0.2px currentColor"><span style="color:#569cd6;">title</span><span style="color:#cccccc;">: </span><span style="color:#ce9178;">"Antigravity"</span></div>
<div class="t" style="left:68px;top:90.5px;font-family:'Liberation Mono',monospace;font-size:12.8px;line-height:19px;transform:scaleY(1.1);-webkit-text-stroke:0.2px currentColor"><span style="color:#569cd6;">lang</span><span style="color:#cccccc;">: </span><span style="color:#ce9178;">nl</span></div>
<div class="t" style="left:68px;top:109.5px;font-family:'Liberation Mono',monospace;font-size:12.8px;line-height:19px;transform:scaleY(1.1);-webkit-text-stroke:0.2px currentColor"><span style="color:#569cd6;">sidebar</span><span style="color:#cccccc;">: </span><span style="color:#ce9178;">id-voorbeelden</span></div>
<div class="t" style="left:68px;top:128.5px;font-family:'Liberation Mono',monospace;font-size:12.8px;line-height:19px;transform:scaleY(1.1);-webkit-text-stroke:0.2px currentColor"><span style="color:#cccccc;">---</span></div>
<div class="t" style="left:68px;top:166.5px;font-family:'Liberation Mono',monospace;font-size:12.8px;line-height:19px;transform:scaleY(1.1);-webkit-text-stroke:0.2px currentColor"><span style="color:#cccccc;">[</span><span style="color:#ce9178;">Antigravity</span><span style="color:#cccccc;">](</span><span style="color:#cccccc;text-decoration:underline;text-underline-offset:3px">https://antigravity.com/</span><span style="color:#cccccc;">)</span></div>
<div class="t" style="left:68px;top:185.5px;font-family:'Liberation Mono',monospace;font-size:12.8px;line-height:19px;transform:scaleY(1.1);-webkit-text-stroke:0.2px currentColor"><span style="color:#cccccc;">is </span><span style="color:#cccccc;background:#741d1d;text-decoration:line-through">de</span><span style="color:#7a7a7a;font-style:italic">een</span><span style="color:#cccccc;"> </span><span style="border-left:2px solid #aeafad;margin-left:-1px"></span><span style="color:#cccccc;">AI-assistent van het Google</span></div>
<div class="t" style="left:68px;top:204.5px;font-family:'Liberation Mono',monospace;font-size:12.8px;line-height:19px;transform:scaleY(1.1);-webkit-text-stroke:0.2px currentColor"><span style="color:#cccccc;">DeepMind-team, geoptimaliseerd voor</span></div>
<div class="t" style="left:68px;top:223.5px;font-family:'Liberation Mono',monospace;font-size:12.8px;line-height:19px;transform:scaleY(1.1);-webkit-text-stroke:0.2px currentColor"><span style="color:#cccccc;">geavanceerde coderingstaken. Het is de</span></div>
<div class="t" style="left:68px;top:242.5px;font-family:'Liberation Mono',monospace;font-size:12.8px;line-height:19px;transform:scaleY(1.1);-webkit-text-stroke:0.2px currentColor"><span style="color:#cccccc;">assistent waarmee de auteur van deze</span></div>
<div class="t" style="left:68px;top:261.5px;font-family:'Liberation Mono',monospace;font-size:12.8px;line-height:19px;transform:scaleY(1.1);-webkit-text-stroke:0.2px currentColor"><span style="color:#cccccc;">module heeft samengewerkt bij het bouwen</span></div>
<div class="t" style="left:68px;top:280.5px;font-family:'Liberation Mono',monospace;font-size:12.8px;line-height:19px;transform:scaleY(1.1);-webkit-text-stroke:0.2px currentColor"><span style="color:#cccccc;">van deze website — inclusief het</span></div>
<div class="t" style="left:68px;top:299.5px;font-family:'Liberation Mono',monospace;font-size:12.8px;line-height:19px;transform:scaleY(1.1);-webkit-text-stroke:0.2px currentColor"><span style="color:#cccccc;">schrijven van deze pagina.</span></div>
<div class="t" style="left:68px;top:337.5px;font-family:'Liberation Mono',monospace;font-size:12.8px;line-height:19px;transform:scaleY(1.1);-webkit-text-stroke:0.2px currentColor"><span style="color:#cccccc;">Antigravity illustreert een nieuwe manier</span></div>
<div class="t" style="left:68px;top:356.5px;font-family:'Liberation Mono',monospace;font-size:12.8px;line-height:19px;transform:scaleY(1.1);-webkit-text-stroke:0.2px currentColor"><span style="color:#cccccc;">van werken: AI niet alleen als hulp bij</span></div>
<div class="t" style="left:68px;top:375.5px;font-family:'Liberation Mono',monospace;font-size:12.8px;line-height:19px;transform:scaleY(1.1);-webkit-text-stroke:0.2px currentColor"><span style="color:#cccccc;">het </span><span style="color:#cccccc;font-style:italic">*schrijven*</span><span style="color:#cccccc;">, maar als actieve</span></div>
<div class="t" style="left:68px;top:394.5px;font-family:'Liberation Mono',monospace;font-size:12.8px;line-height:19px;transform:scaleY(1.1);-webkit-text-stroke:0.2px currentColor"><span style="color:#cccccc;">bouwpartner bij het produceren van</span></div>
<div class="t" style="left:68px;top:413.5px;font-family:'Liberation Mono',monospace;font-size:12.8px;line-height:19px;transform:scaleY(1.1);-webkit-text-stroke:0.2px currentColor"><span style="color:#cccccc;">digitale producten. De auteur beschreef</span></div>
<div class="t" style="left:68px;top:432.5px;font-family:'Liberation Mono',monospace;font-size:12.8px;line-height:19px;transform:scaleY(1.1);-webkit-text-stroke:0.2px currentColor"><span style="color:#cccccc;">wat hij wilde, Antigravity maakte de</span></div>
<div class="t" style="left:68px;top:451.5px;font-family:'Liberation Mono',monospace;font-size:12.8px;line-height:19px;transform:scaleY(1.1);-webkit-text-stroke:0.2px currentColor"><span style="color:#cccccc;">bestanden aan, paste de structuur aan,</span></div>
<div class="t" style="left:68px;top:470.5px;font-family:'Liberation Mono',monospace;font-size:12.8px;line-height:19px;transform:scaleY(1.1);-webkit-text-stroke:0.2px currentColor"><span style="color:#cccccc;">zocht informatie op en stelde</span></div>
<div class="a" style="left:408px;top:51px;width:44px;font-family:'Liberation Mono',monospace;font-size:1.67px;line-height:2px;white-space:pre;font-weight:bold;-webkit-text-stroke:0.2px currentColor;opacity:0.75"><span style="color:#cccccc">---</span><br><span style="color:#569cd6">title</span><span style="color:#cccccc">: </span><span style="color:#ce9178">"Antigravity"</span><br><span style="color:#569cd6">lang</span><span style="color:#cccccc">: </span><span style="color:#ce9178">nl</span><br><span style="color:#569cd6">sidebar</span><span style="color:#cccccc">: </span><span style="color:#ce9178">id-voorbeelden</span><br><span style="color:#cccccc">---</span><br>&nbsp;<br><span style="color:#cccccc">[</span><span style="color:#ce9178">Antigravity</span><span style="color:#cccccc">](https://antigravity.com/)</span><br><span style="color:#cccccc">is deeen AI-assistent van het Google</span><br><span style="color:#cccccc">DeepMind-team, geoptimaliseerd voor</span><br><span style="color:#cccccc">geavanceerde coderingstaken. Het is de</span><br><span style="color:#cccccc">assistent waarmee de auteur van deze</span><br><span style="color:#cccccc">module heeft samengewerkt bij het bouwen</span><br><span style="color:#cccccc">van deze website — inclusief het</span><br><span style="color:#cccccc">schrijven van deze pagina.</span><br>&nbsp;<br><span style="color:#cccccc">Antigravity illustreert een nieuwe manier</span><br><span style="color:#cccccc">van werken: AI niet alleen als hulp bij</span><br><span style="color:#cccccc">het *schrijven*, maar als actieve</span><br><span style="color:#cccccc">bouwpartner bij het produceren van</span><br><span style="color:#cccccc">digitale producten. De auteur beschreef</span><br><span style="color:#cccccc">wat hij wilde, Antigravity maakte de</span><br><span style="color:#cccccc">bestanden aan, paste de structuur aan,</span><br><span style="color:#cccccc">zocht informatie op en stelde</span><br><span style="color:#cccccc">verbeteringen voor. De auteur</span><br><span style="color:#cccccc">corrigeerde, stuurde bij en nam de</span><br><span style="color:#cccccc">eindverantwoordelijkheid.</span><br>&nbsp;<br><span style="color:#569cd6">## Wat maakt dit interessant?</span><br>&nbsp;<br><span style="color:#cccccc">Dit is geen ChatGPT die een tekst</span><br><span style="color:#cccccc">schrijft die je daarna kopieert. Dit is</span><br><span style="color:#cccccc">een tool (applicatie) die:</span><br>&nbsp;<br><span style="color:#569cd6">-</span><span style="color:#cccccc">   Bestanden aanmaakt en bewerkt op je</span><br><span style="color:#cccccc">    computer</span><br><span style="color:#569cd6">-</span><span style="color:#cccccc">   Zelfstandig keuzes maakt en die</span><br><span style="color:#cccccc">    uitlegt</span><br><span style="color:#569cd6">-</span><span style="color:#cccccc">   Fouten opspoort en corrigeert</span><br><span style="color:#569cd6">-</span><span style="color:#cccccc">   Vragen stelt als iets onduidelijk is</span><br>&nbsp;<br><span style="color:#cccccc">Het concept van een agentische</span><br><span style="color:#cccccc">AI-codeerassistent is beschikbaar in</span><br><span style="color:#cccccc">meerdere vormen, zo is er Claude Code](</span><br><span style="color:#cccccc">claude-code.qmd), GitHub Copilot, Gemini</span><br><span style="color:#cccccc">CLI.</span><br><span style="color:#cccccc">Wil je zelf experimenteren maar het</span><br><span style="color:#cccccc">technisch eenvoudiger houden? Probeer dan</span><br><span style="color:#ce9178">[Google AI Studio]</span><span style="color:#cccccc">(ai-studio.qmd) voor</span><br><span style="color:#cccccc">een eerste kennismaking met vibecoding</span><br><span style="color:#cccccc">(een website bouwen met instructies in</span><br><span style="color:#cccccc">gewone taal, zonder een regel code te</span><br><span style="color:#cccccc">schrijven).</span></div>
<div class="a" style="left:402px;top:64px;width:2px;height:16px;background:#0078d4"></div>
<div class="a" style="left:402px;top:132px;width:2px;height:24px;background:#0078d4"></div>
<div class="a" style="left:451px;top:52px;width:14px;height:440px;background:#1d1d1d;border-left:1px solid #0f0f0f;border-top:1px solid #0f0f0f"></div>
<div class="a" style="left:452px;top:87px;width:4px;height:5px;background:#0078d4;opacity:0.8"></div>
<div class="a" style="left:452px;top:92px;width:13px;height:2px;background:#a0a0a0;opacity:0.7"></div>
<div class="a" style="left:452px;top:289px;width:3px;height:34px;background:#0078d4"></div>
</div>
<!-- EDITOR GROUP 2 -->
<div id="ed2" class="a" style="left:920px;top:36px;width:467px;height:492px;background:#1f1f1f;overflow:hidden">
<div class="a" style="left:0;top:0;width:1px;height:56px;background:#2b2b2b"></div>
<div class="a" style="left:1px;top:0;width:466px;height:29px;background:#181818;border-bottom:1px solid #2b2b2b"></div>
<div class="a" style="left:1px;top:0;width:147px;height:29px;background:#1f1f1f;border-right:1px solid #2b2b2b"></div>
<svg style="left:12px;top:8px" width="12" height="14" viewBox="0 0 12 14"><path d="M1.5 0.6 H7.5 L11.4 4.5 V12.4 Q11.4 13.4 10.4 13.4 H1.6 Q0.6 13.4 0.6 12.4 V1.6 Q0.6 0.6 1.6 0.6 Z M7.3 0.6 V4.7 H11.4" fill="none" stroke="#8796a8" stroke-width="1.1"/></svg>
<div class="t" style="left:32px;top:8px;color:#9d9d9d;">Quarto Preview</div>
<svg style="left:129px;top:10px" width="10" height="10" viewBox="0 0 10 10"><path d="M1 1 L9 9 M9 1 L1 9" stroke="#9d9d9d" stroke-width="1.2"/></svg>
<svg style="left:436px;top:14px" width="14" height="3" viewBox="0 0 14 3"><circle cx="1.5" cy="1.5" r="1.1" fill="#cccccc"/><circle cx="7" cy="1.5" r="1.1" fill="#cccccc"/><circle cx="12.5" cy="1.5" r="1.1" fill="#cccccc"/></svg>
<svg style="left:17px;top:38px" width="14" height="12" viewBox="0 0 14 12"><path d="M13 6 H1.5 M6 1.2 L1.2 6 L6 10.8" fill="none" stroke="#cccccc" stroke-width="1.1"/></svg>
<svg style="left:43px;top:38px" width="14" height="12" viewBox="0 0 14 12"><path d="M1 6 H12.5 M8 1.2 L12.8 6 L8 10.8" fill="none" stroke="#cccccc" stroke-width="1.1"/></svg>
<svg style="left:68px;top:36px" width="15" height="15" viewBox="0 0 15 15"><path d="M4.2 2.8 A5.8 5.8 0 1 0 7.5 1.7" fill="none" stroke="#cccccc" stroke-width="1.2"/><path d="M4.5 0.5 L4.2 3 L6.8 3.6" fill="none" stroke="#cccccc" stroke-width="1.1"/></svg>
<div class="a" style="left:91px;top:34px;width:225px;height:19px;background:#2a2a2a;overflow:hidden"></div>
<div class="t" style="left:95px;top:36px;color:#cccccc;font-size:12px">http://localhost:5364/voorbeelden/antigra</div>
<div class="a" style="left:320px;top:34px;width:97px;height:19px;background:#2a2a2a"></div>
<div class="t" style="left:328px;top:37px;color:#cccccc;font-size:12px">Zoom: (Auto)</div>
<svg style="left:402px;top:40px" width="11" height="7" viewBox="0 0 11 7"><path d="M1 1 L5.5 5.5 L10 1" fill="none" stroke="#cccccc" stroke-width="1.6"/></svg>
<svg style="left:431px;top:36px" width="16" height="16" viewBox="0 0 16 16"><path d="M6 1 H1 V15 H15 V10 M9 1 H15 V7 M15 1 L7 9" fill="none" stroke="#cccccc" stroke-width="1.2"/></svg>
<div class="a" style="left:0px;top:55px;width:467px;height:437px;background:#ffffff;overflow:hidden">
<div class="a" style="left:0;top:0;width:466px;height:28px;background:#f8f9fa"></div>
<div class="t" style="left:14px;top:9.2px;color:#545555;font-size:8px;line-height:9.6px;">MOVEL AI 2025-2026</div>
<div class="t" style="left:371px;top:9.7px;color:#6b6f73;font-size:7.1px;line-height:8.5px;">Over deze module</div>
<svg style="left:438px;top:8px" width="11" height="11" viewBox="0 0 11 11"><circle cx="4.7" cy="4.7" r="3.8" fill="none" stroke="#444" stroke-width="1.1"/><path d="M7.5 7.5 L10 10" stroke="#444" stroke-width="1.2"/></svg>
<div class="a" style="left:99px;top:28px;width:1px;height:420px;background:#e9ecef"></div>
<div class="t" style="left:9px;top:55.6px;color:#5a5e62;font-size:6.6px;line-height:7.9px;">Home</div>
<div class="t" style="left:9px;top:66.2px;color:#5a5e62;font-size:6.6px;line-height:7.9px;">Voorbeelden van AI</div>
<div class="t" style="left:9px;top:76.8px;color:#5a5e62;font-size:6.6px;line-height:7.9px;">Google AI-studio</div>
<div class="t" style="left:9px;top:87.4px;color:#4758ab;font-size:6.6px;line-height:7.9px;">Antigravity</div>
<div class="t" style="left:9px;top:97.9px;color:#5a5e62;font-size:6.6px;line-height:7.9px;">Canva AI</div>
<div class="t" style="left:9px;top:108.5px;color:#5a5e62;font-size:6.6px;line-height:7.9px;">ChatGPT</div>
<div class="t" style="left:9px;top:119.1px;color:#5a5e62;font-size:6.6px;line-height:7.9px;">Claude.ai</div>
<div class="t" style="left:9px;top:129.6px;color:#5a5e62;font-size:6.6px;line-height:7.9px;">Claude Code</div>
<div class="t" style="left:9px;top:140.2px;color:#5a5e62;font-size:6.6px;line-height:7.9px;">Microsoft Copilot</div>
<div class="t" style="left:9px;top:150.8px;color:#5a5e62;font-size:6.6px;line-height:7.9px;">DeepL</div>
<div class="t" style="left:9px;top:161.3px;color:#5a5e62;font-size:6.6px;line-height:7.9px;">ElevenLabs</div>
<div class="t" style="left:9px;top:171.9px;color:#5a5e62;font-size:6.6px;line-height:7.9px;">Gamma.app</div>
<div class="t" style="left:9px;top:182.5px;color:#5a5e62;font-size:6.6px;line-height:7.9px;">Google Gemini</div>
<div class="t" style="left:9px;top:193.0px;color:#5a5e62;font-size:6.6px;line-height:7.9px;">GPT-NL</div>
<div class="t" style="left:9px;top:203.6px;color:#5a5e62;font-size:6.6px;line-height:7.9px;">Grammarly</div>
<div class="t" style="left:9px;top:214.2px;color:#5a5e62;font-size:6.6px;line-height:7.9px;">HeyGen</div>
<div class="t" style="left:9px;top:224.8px;color:#5a5e62;font-size:6.6px;line-height:7.9px;">Invideo AI</div>
<div class="t" style="left:9px;top:235.3px;color:#5a5e62;font-size:6.6px;line-height:7.9px;">Kling AI</div>
<div class="t" style="left:9px;top:245.9px;color:#5a5e62;font-size:6.6px;line-height:7.9px;">Magic Eraser</div>
<div class="t" style="left:9px;top:256.5px;color:#5a5e62;font-size:6.6px;line-height:7.9px;">Midjourney</div>
<div class="t" style="left:9px;top:267.0px;color:#5a5e62;font-size:6.6px;line-height:7.9px;">Nano Banana</div>
<div class="t" style="left:9px;top:277.6px;color:#5a5e62;font-size:6.6px;line-height:7.9px;">Napkin AI</div>
<div class="t" style="left:9px;top:288.2px;color:#5a5e62;font-size:6.6px;line-height:7.9px;">Google NotebookLM</div>
<div class="t" style="left:9px;top:298.8px;color:#5a5e62;font-size:6.6px;line-height:7.9px;">Perplexity AI</div>
<div class="t" style="left:9px;top:309.3px;color:#5a5e62;font-size:6.6px;line-height:7.9px;">Runway ML</div>
<div class="t" style="left:9px;top:319.9px;color:#5a5e62;font-size:6.6px;line-height:7.9px;">Suno</div>
<div class="t" style="left:9px;top:330.5px;color:#5a5e62;font-size:6.6px;line-height:7.9px;">Synthesia</div>
<div class="t" style="left:9px;top:341.0px;color:#5a5e62;font-size:6.6px;line-height:7.9px;">Teachable Machine</div>
<div class="t" style="left:9px;top:351.6px;color:#5a5e62;font-size:6.6px;line-height:7.9px;">This [...] Does Not Exist</div>
<div class="t" style="left:9px;top:362.2px;color:#5a5e62;font-size:6.6px;line-height:7.9px;">Gemini Veo 3.1</div>
<div class="t" style="left:9px;top:372.7px;color:#5a5e62;font-size:6.6px;line-height:7.9px;">Wav2Lip – Lipsync met AI</div>
<div class="t" style="left:9px;top:383.3px;color:#5a5e62;font-size:6.6px;line-height:7.9px;">Whisper – Spraak naar tekst</div>
<div class="t" style="left:111px;top:42.4px;color:#2b2f33;font-size:13.4px;line-height:16.1px;font-weight:bold">Antigravity</div>
<div class="t" style="left:111px;top:67.1px;color:#484c50;font-size:7px;line-height:8.4px;"><span style="color:#4758ab;text-decoration:underline">Antigravity</span> is de AI-assistent van het Google DeepMind-team, geoptimaliseerd</div>
<div class="t" style="left:111px;top:78.2px;color:#484c50;font-size:7px;line-height:8.4px;">voor geavanceerde coderingstaken. Het is de assistent waarmee de auteur</div>
<div class="t" style="left:111px;top:89.4px;color:#484c50;font-size:7px;line-height:8.4px;">van deze module heeft samengewerkt bij het bouwen van deze website —</div>
<div class="t" style="left:111px;top:101.0px;color:#484c50;font-size:7px;line-height:8.4px;">inclusief het schrijven van deze pagina.</div>
<div class="t" style="left:111px;top:120.6px;color:#484c50;font-size:7px;line-height:8.4px;">Antigravity illustreert een nieuwe manier van werken: AI niet alleen als hulp</div>
<div class="t" style="left:111px;top:131.8px;color:#484c50;font-size:7px;line-height:8.4px;">bij het <i>schrijven</i>, maar als actieve bouwpartner bij het produceren van</div>
<div class="t" style="left:111px;top:142.6px;color:#484c50;font-size:7px;line-height:8.4px;">digitale producten. De auteur beschreef wat hij wilde, Antigravity maakte de</div>
<div class="t" style="left:111px;top:154.3px;color:#484c50;font-size:7px;line-height:8.4px;">bestanden aan, paste de structuur aan, zocht informatie op en stelde</div>
<div class="t" style="left:111px;top:165.4px;color:#484c50;font-size:7px;line-height:8.4px;">verbeteringen voor. De auteur corrigeerde, stuurde bij en nam de</div>
<div class="t" style="left:111px;top:176.3px;color:#484c50;font-size:7px;line-height:8.4px;">eindverantwoordelijkheid.</div>
<div class="t" style="left:111px;top:202.2px;color:#2b2f33;font-size:11px;line-height:13.2px;font-weight:bold">Wat maakt dit interessant?</div>
<div class="a" style="left:111px;top:219px;width:244px;height:1px;background:#e5e5e5"></div>
<div class="t" style="left:111px;top:229.3px;color:#484c50;font-size:7px;line-height:8.4px;">Dit is geen ChatGPT die een tekst schrijft die je daarna kopieert. Dit is een tool</div>
<div class="t" style="left:111px;top:240.4px;color:#484c50;font-size:7px;line-height:8.4px;">(applicatie) die:</div>
<div class="a" style="left:119px;top:261.0px;width:3px;height:3px;border-radius:50%;background:#444"></div>
<div class="t" style="left:126.5px;top:259.3px;color:#484c50;font-size:7px;line-height:8.4px;">Bestanden aanmaakt en bewerkt op je computer</div>
<div class="a" style="left:119px;top:272.1px;width:3px;height:3px;border-radius:50%;background:#444"></div>
<div class="t" style="left:126.5px;top:270.4px;color:#484c50;font-size:7px;line-height:8.4px;">Zelfstandig keuzes maakt en die uitlegt</div>
<div class="a" style="left:119px;top:283.8px;width:3px;height:3px;border-radius:50%;background:#444"></div>
<div class="t" style="left:126.5px;top:282.1px;color:#484c50;font-size:7px;line-height:8.4px;">Fouten opspoort en corrigeert</div>
<div class="a" style="left:119px;top:294.9px;width:3px;height:3px;border-radius:50%;background:#444"></div>
<div class="t" style="left:126.5px;top:293.2px;color:#484c50;font-size:7px;line-height:8.4px;">Vragen stelt als iets onduidelijk is</div>
<div class="t" style="left:111px;top:312.2px;color:#484c50;font-size:7px;line-height:8.4px;">Het concept van een agentische AI-codeerassistent is beschikbaar in</div>
<div class="t" style="left:111px;top:323.4px;color:#484c50;font-size:7px;line-height:8.4px;">meerdere vormen, zo is er Claude Code](claude-code.qmd), GitHub Copilot,</div>
<div class="t" style="left:111px;top:334.5px;color:#484c50;font-size:7px;line-height:8.4px;">Gemini CLI. Wil je zelf experimenteren maar het technisch eenvoudiger</div>
<div class="t" style="left:111px;top:346.2px;color:#484c50;font-size:7px;line-height:8.4px;">houden? Probeer dan <span style="color:#4758ab;text-decoration:underline">Google AI Studio</span> voor een eerste kennismaking met</div>
<div class="t" style="left:111px;top:357.4px;color:#484c50;font-size:7px;line-height:8.4px;">vibecoding (een website bouwen met instructies in gewone taal, zonder een</div>
<div class="t" style="left:111px;top:369.1px;color:#484c50;font-size:7px;line-height:8.4px;">regel code te schrijven).</div>
<div class="t" style="left:367px;top:36.3px;color:#4f5357;font-size:6.2px;line-height:7.4px;">Op deze pagina</div>
<div class="a" style="left:369px;top:45px;width:1px;height:12px;background:#7d9ae6"></div>
<div class="t" style="left:374px;top:46.8px;color:#3d6ad6;font-size:6.2px;line-height:7.4px;">Wat maakt dit interessant?</div>
</div>
</div>
<!-- PANEL -->
<div id="panel" class="a" style="left:455px;top:528px;width:931px;height:482px;background:#181818;border-top:1px solid #2b2b2b;overflow:hidden">
<div class="a" style="left:257px;top:6px;width:61px;height:23px;border-radius:4px;background:#2b2b2b"></div>
<div class="t" style="left:20px;top:10px;color:#9d9d9d;font-size:12px">Problems</div>
<div class="t" style="left:95px;top:10px;color:#9d9d9d;font-size:12px">Output</div>
<div class="t" style="left:158px;top:10px;color:#9d9d9d;font-size:12px">Debug Console</div>
<div class="t" style="left:265px;top:10px;color:#e7e7e7;font-size:12px">Terminal</div>
<div class="t" style="left:336px;top:10px;color:#9d9d9d;font-size:12px">Ports</div>
<svg style="left:797px;top:11px" width="13" height="13" viewBox="0 0 13 13"><path d="M6.5 0.5 V12.5 M0.5 6.5 H12.5" stroke="#cccccc" stroke-width="1.2"/></svg>
<svg style="left:816px;top:15px" width="9" height="6" viewBox="0 0 9 6"><path d="M0.8 0.8 L4.5 4.5 L8.2 0.8" fill="none" stroke="#cccccc" stroke-width="1.1"/></svg>
<svg style="left:836px;top:16px" width="14" height="3" viewBox="0 0 14 3"><circle cx="1.5" cy="1.5" r="1.1" fill="#cccccc"/><circle cx="7" cy="1.5" r="1.1" fill="#cccccc"/><circle cx="12.5" cy="1.5" r="1.1" fill="#cccccc"/></svg>
<div class="a" style="left:863px;top:10px;width:1px;height:16px;background:#555"></div>
<svg style="left:875px;top:11px" width="15" height="13" viewBox="0 0 15 13"><path d="M0.6 3.5 V0.6 H3.5 M11.5 0.6 H14.4 V3.5 M14.4 9.5 V12.4 H11.5 M3.5 12.4 H0.6 V9.5" fill="none" stroke="#cccccc" stroke-width="1.1"/><rect x="3" y="3.2" width="9" height="6.6" fill="none" stroke="#cccccc" stroke-width="1.6"/></svg>
<svg style="left:903px;top:12px" width="11" height="11" viewBox="0 0 11 11"><path d="M0.8 0.8 L10.2 10.2 M10.2 0.8 L0.8 10.2" stroke="#cccccc" stroke-width="1.2"/></svg>
<div class="t" style="left:20px;top:72.20000000000005px;font-family:'Liberation Mono',monospace;font-size:11.65px;line-height:17px;transform:scaleY(1.12);-webkit-text-stroke:0.2px currentColor"><span style="color:#cccccc;">    - ../webex.css</span></div>
<div class="t" style="left:20px;top:89.20000000000005px;font-family:'Liberation Mono',monospace;font-size:11.65px;line-height:17px;transform:scaleY(1.12);-webkit-text-stroke:0.2px currentColor"><span style="color:#cccccc;">  variables: {}</span></div>
<div class="t" style="left:20px;top:123.20000000000005px;font-family:'Liberation Mono',monospace;font-size:11.65px;line-height:17px;transform:scaleY(1.12);-webkit-text-stroke:0.2px currentColor"><span style="color:#cccccc;">metadata</span></div>
<div class="t" style="left:20px;top:140.20000000000005px;font-family:'Liberation Mono',monospace;font-size:11.65px;line-height:17px;transform:scaleY(1.12);-webkit-text-stroke:0.2px currentColor"><span style="color:#cccccc;">  document-css: false</span></div>
<div class="t" style="left:20px;top:157.20000000000005px;font-family:'Liberation Mono',monospace;font-size:11.65px;line-height:17px;transform:scaleY(1.12);-webkit-text-stroke:0.2px currentColor"><span style="color:#cccccc;">  link-citations: true</span></div>
<div class="t" style="left:20px;top:174.20000000000005px;font-family:'Liberation Mono',monospace;font-size:11.65px;line-height:17px;transform:scaleY(1.12);-webkit-text-stroke:0.2px currentColor"><span style="color:#cccccc;">  date-format: long</span></div>
<div class="t" style="left:20px;top:191.20000000000005px;font-family:'Liberation Mono',monospace;font-size:11.65px;line-height:17px;transform:scaleY(1.12);-webkit-text-stroke:0.2px currentColor"><span style="color:#cccccc;">  lang: nl</span></div>
<div class="t" style="left:20px;top:208.20000000000005px;font-family:'Liberation Mono',monospace;font-size:11.65px;line-height:17px;transform:scaleY(1.12);-webkit-text-stroke:0.2px currentColor"><span style="color:#cccccc;">  lightbox: auto</span></div>
<div class="t" style="left:20px;top:225.20000000000005px;font-family:'Liberation Mono',monospace;font-size:11.65px;line-height:17px;transform:scaleY(1.12);-webkit-text-stroke:0.2px currentColor"><span style="color:#cccccc;">  theme:</span></div>
<div class="t" style="left:20px;top:242.20000000000005px;font-family:'Liberation Mono',monospace;font-size:11.65px;line-height:17px;transform:scaleY(1.12);-webkit-text-stroke:0.2px currentColor"><span style="color:#cccccc;">    - cosmo</span></div>
<div class="t" style="left:20px;top:259.20000000000005px;font-family:'Liberation Mono',monospace;font-size:11.65px;line-height:17px;transform:scaleY(1.12);-webkit-text-stroke:0.2px currentColor"><span style="color:#cccccc;">    - brand</span></div>
<div class="t" style="left:20px;top:276.20000000000005px;font-family:'Liberation Mono',monospace;font-size:11.65px;line-height:17px;transform:scaleY(1.12);-webkit-text-stroke:0.2px currentColor"><span style="color:#cccccc;">  title: Antigravity</span></div>
<div class="t" style="left:20px;top:293.20000000000005px;font-family:'Liberation Mono',monospace;font-size:11.65px;line-height:17px;transform:scaleY(1.12);-webkit-text-stroke:0.2px currentColor"><span style="color:#cccccc;">  sidebar: id-voorbeelden</span></div>
<div class="t" style="left:20px;top:327.20000000000005px;font-family:'Liberation Mono',monospace;font-size:11.65px;line-height:17px;transform:scaleY(1.12);-webkit-text-stroke:0.2px currentColor"><span style="color:#cccccc;">Output created: ..\docs\voorbeelden\antigravity.html</span></div>
<div class="t" style="left:20px;top:361.20000000000005px;font-family:'Liberation Mono',monospace;font-size:11.65px;line-height:17px;transform:scaleY(1.12);-webkit-text-stroke:0.2px currentColor"><span style="color:#cccccc;">Preparing to preview</span></div>
<div class="t" style="left:20px;top:395.20000000000005px;font-family:'Liberation Mono',monospace;font-size:11.65px;line-height:17px;transform:scaleY(1.12);-webkit-text-stroke:0.2px currentColor"><span style="color:#cccccc;">Watching files for changes</span></div>
<div class="t" style="left:20px;top:412.20000000000005px;font-family:'Liberation Mono',monospace;font-size:11.65px;line-height:17px;transform:scaleY(1.12);-webkit-text-stroke:0.2px currentColor"><span style="color:#cccccc;">Browse at http://localhost:5364/voorbeelden/antigravity.html</span></div>
<div class="t" style="left:20px;top:429.20000000000005px;font-family:'Liberation Mono',monospace;font-size:11.65px;line-height:17px;transform:scaleY(1.12);-webkit-text-stroke:0.2px currentColor"><span style="color:#cccccc;">Listening on http://127.0.0.1:5364/</span></div>
<div class="t" style="left:20px;top:446.20000000000005px;font-family:'Liberation Mono',monospace;font-size:11.65px;line-height:17px;transform:scaleY(1.12);-webkit-text-stroke:0.2px currentColor"><span style="color:#cccccc;">GET: /voorbeelden/antigravity.html</span></div>
<div class="a" style="left:0;top:35px;width:797px;height:36px;background:#181818;box-shadow:0 2px 3px -1px #000"></div>
<div class="a" style="left:0;top:71px;width:795px;height:1px;background:#0c0c0c"></div>
<div class="t" style="left:20px;top:36.200000000000045px;font-family:'Liberation Mono',monospace;font-size:11.65px;line-height:17px;transform:scaleY(1.12);-webkit-text-stroke:0.2px currentColor"><span style="color:#cccccc;">PS D:\Temp\MOVEL AI 2025-2026&gt; </span><span style="color:#e5e510;">quarto</span><span style="color:#cccccc;"> preview </span><span style="color:#29b8db;">"d:/Temp/MOVEL AI 2025-2026/voorbeelden</span></div>
<div class="t" style="left:20px;top:53.200000000000045px;font-family:'Liberation Mono',monospace;font-size:11.65px;line-height:17px;transform:scaleY(1.12);-webkit-text-stroke:0.2px currentColor"><span style="color:#29b8db;">/antigravity.qmd"</span><span style="color:#8b8b8b;"> --no-browser --no-watch-inputs</span></div>
<div class="a" style="left:797px;top:38px;width:1px;height:450px;background:#0e0e0e"></div>
<div class="a" style="left:797px;top:38px;width:14px;height:1px;background:#0e0e0e"></div>
<div class="a" style="left:798px;top:38px;width:4px;height:6px;background:#6a6a6a"></div>
<div class="a" style="left:811px;top:34px;width:1px;height:450px;background:#2b2b2b"></div>
<div class="a" style="left:812px;top:78px;width:119px;height:22px;background:#37373d;border-left:1px solid #0078d4"></div>
<svg style="left:823px;top:38px" width="14" height="14" viewBox="0 0 14 14"><rect x="0.6" y="0.6" width="12.8" height="12.8" rx="1" fill="none" stroke="#cccccc" stroke-width="1.1"/><path d="M3 3.8 L6 6.6 L3 9.4 M6.5 10.3 H11" fill="none" stroke="#cccccc" stroke-width="1.1"/></svg>
<div class="t" style="left:842px;top:38px;color:#e0e0e0;">pwsh</div>
<div class="t" style="left:877px;top:38px;color:#9d9d9d;font-size:11.7px">Scripts</div>
<svg style="left:823px;top:60px" width="14" height="14" viewBox="0 0 14 14"><rect x="0.6" y="0.6" width="12.8" height="12.8" rx="1" fill="none" stroke="#cccccc" stroke-width="1.1"/><path d="M3 3.8 L6 6.6 L3 9.4 M6.5 10.3 H11" fill="none" stroke="#cccccc" stroke-width="1.1"/></svg>
<div class="t" style="left:842px;top:60px;color:#e0e0e0;">pwsh</div>
<svg style="left:823px;top:82px" width="14" height="14" viewBox="0 0 14 14"><rect x="0.6" y="0.6" width="12.8" height="12.8" rx="1" fill="none" stroke="#cccccc" stroke-width="1.1"/><path d="M3 3.8 L6 6.6 L3 9.4 M6.5 10.3 H11" fill="none" stroke="#cccccc" stroke-width="1.1"/></svg>
<div class="t" style="left:842px;top:82px;color:#e0e0e0;">Quarto Prev...</div>
</div>
<!-- AGENT -->
<div id="agent" class="a" style="left:1386px;top:36px;width:525px;height:974px;background:#181818;border-left:1px solid #2b2b2b;overflow:hidden">
<div class="t" style="left:8px;top:7.5px;color:#cccccc;font-size:13px;">Adding and Committing Changes</div>
<div class="a" style="left:0;top:29px;width:525px;height:1px;background:#2b2b2b"></div>
<svg style="left:432px;top:9px" width="12" height="12" viewBox="0 0 12 12"><path d="M6 0.5 V11.5 M0.5 6 H11.5" stroke="#cccccc" stroke-width="1.3"/></svg>
<svg style="left:454px;top:7px" width="16" height="16" viewBox="0 0 16 16"><path d="M2.6 5.2 A6.2 6.2 0 1 1 1.8 8.5" fill="none" stroke="#cccccc" stroke-width="1.3"/><path d="M1.5 1.8 L2.3 5.6 L6 4.8" fill="none" stroke="#cccccc" stroke-width="1.2"/><path d="M8 4.5 V8.2 L10.5 9.8" fill="none" stroke="#cccccc" stroke-width="1.2"/></svg>
<svg style="left:480px;top:14px" width="12" height="3" viewBox="0 0 12 3"><circle cx="1.3" cy="1.5" r="1" fill="#cccccc"/><circle cx="6" cy="1.5" r="1" fill="#cccccc"/><circle cx="10.7" cy="1.5" r="1" fill="#cccccc"/></svg>
<svg style="left:505px;top:10px" width="10" height="10" viewBox="0 0 10 10"><path d="M0.6 0.6 L9.4 9.4 M9.4 0.6 L0.6 9.4" stroke="#cccccc" stroke-width="1.2"/></svg>
<div class="a" style="left:519px;top:32px;width:5px;height:692px;background:#3a3a3a"></div>
<div class="a" style="left:16px;top:46px;width:485px;height:36px;border-radius:8px;background:#232326"></div>
<div class="t" style="left:24px;top:57.5px;color:#d4d4d4;font-size:13px;">add changed files to github, commit, push, no plan</div>
<svg style="left:478px;top:56px" width="14" height="13" viewBox="0 0 14 13"><path d="M4.5 1 L1 4.5 L4.5 8 M1 4.5 H9 Q13 4.5 13 8.2 Q13 12 9 12 H7" fill="none" stroke="#9a9a9a" stroke-width="1.2"/></svg>
<svg style="left:22px;top:98.5px" width="6" height="10" viewBox="0 0 6 10"><path d="M1 1 L5 5 L1 9" fill="none" stroke="#9a9a9a" stroke-width="1.2"/></svg>
<div class="t" style="left:40px;top:95.5px;color:#9a9a9a;font-size:13px;">Thought for &lt;1s</div>
<div class="a" style="left:16px;top:132px;width:485px;height:291px;border-radius:8px;border:1px solid #2b2b2b"></div>
<div class="t" style="left:25px;top:138.5px;color:#9a9a9a;font-size:13px;">Ran background command</div>
<div class="t" style="left:425px;top:138.5px;color:#9a9a9a;font-size:12.5px;">Relocate</div>
<svg style="left:479px;top:140px" width="13" height="13" viewBox="0 0 13 13"><path d="M5 1.5 H2 Q1 1.5 1 2.5 V11 Q1 12 2 12 H10.5 Q11.5 12 11.5 11 V8 M7.5 1 H12 V5.5 M12 1 L6 7" fill="none" stroke="#9a9a9a" stroke-width="1.2"/></svg>
<div class="a" style="left:17px;top:160px;width:483px;height:1px;background:#2b2b2b"></div>
<div class="a" style="left:17px;top:393px;width:483px;height:1px;background:#2b2b2b"></div>
<div class="t" style="left:25px;top:170px;font-family:'Liberation Mono',monospace;font-size:11.9px;line-height:18px;transform:scaleY(1.1);-webkit-text-stroke:0.2px currentColor"><span style="color:#8a8a8a">…\MOVEL AI 2025-2026 &gt; </span><span style="color:#e0e0e0">git status</span></div>
<div class="t" style="left:25px;top:189.7px;font-family:'Liberation Mono',monospace;font-size:11.9px;line-height:18px;transform:scaleY(1.1);-webkit-text-stroke:0.2px currentColor"><span style="color:#e0e0e0">Untracked files:</span></div>
<div class="t" style="left:25px;top:208px;font-family:'Liberation Mono',monospace;font-size:11.9px;line-height:18px;transform:scaleY(1.1);-webkit-text-stroke:0.2px currentColor"><span style="color:#e0e0e0">  (use "git add &lt;file&gt;..." to include in what will be committe</span></div>
<div class="t" style="left:25px;top:226.39999999999998px;font-family:'Liberation Mono',monospace;font-size:11.9px;line-height:18px;transform:scaleY(1.1);-webkit-text-stroke:0.2px currentColor"><span style="color:#e0e0e0">d)</span></div>
<div class="t" style="left:25px;top:244.3px;font-family:'Liberation Mono',monospace;font-size:11.9px;line-height:18px;transform:scaleY(1.1);-webkit-text-stroke:0.2px currentColor"><span style="color:#e0e0e0">        ai-geletterdheid/media/ai-geletterdheid-experimenteren.</span></div>
<div class="t" style="left:25px;top:263px;font-family:'Liberation Mono',monospace;font-size:11.9px;line-height:18px;transform:scaleY(1.1);-webkit-text-stroke:0.2px currentColor"><span style="color:#e0e0e0">png</span></div>
<div class="t" style="left:25px;top:281px;font-family:'Liberation Mono',monospace;font-size:11.9px;line-height:18px;transform:scaleY(1.1);-webkit-text-stroke:0.2px currentColor"><span style="color:#e0e0e0">        docs/ai-geletterdheid/media/ai-geletterdheid-experiment</span></div>
<div class="t" style="left:25px;top:299px;font-family:'Liberation Mono',monospace;font-size:11.9px;line-height:18px;transform:scaleY(1.1);-webkit-text-stroke:0.2px currentColor"><span style="color:#e0e0e0">eren.png</span></div>
<div class="t" style="left:25px;top:317px;font-family:'Liberation Mono',monospace;font-size:11.9px;line-height:18px;transform:scaleY(1.1);-webkit-text-stroke:0.2px currentColor"><span style="color:#e0e0e0">        docs/ai-geletterdheid/media/youtube-the-neuron.jpg</span></div>
<div class="t" style="left:25px;top:353.7px;font-family:'Liberation Mono',monospace;font-size:11.9px;line-height:18px;transform:scaleY(1.1);-webkit-text-stroke:0.2px currentColor"><span style="color:#e0e0e0">no changes added to commit (use "git add" and/or "git commit -</span></div>
<div class="t" style="left:25px;top:372.3px;font-family:'Liberation Mono',monospace;font-size:11.9px;line-height:18px;transform:scaleY(1.1);-webkit-text-stroke:0.2px currentColor"><span style="color:#e0e0e0">a")</span></div>
<svg style="left:475px;top:173px" width="13" height="13" viewBox="0 0 13 13"><rect x="3.5" y="3.5" width="9" height="9" rx="2" fill="none" stroke="#777" stroke-width="1.1"/><path d="M1 9.5 V2 Q1 1 2 1 H9.5" fill="none" stroke="#777" stroke-width="1.1"/></svg>
<div class="a" style="left:492px;top:315px;width:5px;height:76px;border-radius:2px;background:#3f3f3f"></div>
<div class="t" style="left:25px;top:401.5px;color:#9a9a9a;font-size:12.5px;">Always run</div>
<svg style="left:91px;top:406px" width="8" height="5" viewBox="0 0 8 5"><path d="M0.8 4.2 L4 1 L7.2 4.2" fill="none" stroke="#9a9a9a" stroke-width="1"/></svg>
<div class="t" style="left:313px;top:401.5px;width:179px;text-align:right;color:#9a9a9a;font-size:12.5px">Exit code 0</div>
<svg style="left:18px;top:444px" width="12" height="12" viewBox="0 0 12 12"><rect x="0.6" y="0.6" width="10.8" height="10.8" rx="1" fill="none" stroke="#9a9a9a" stroke-width="1"/><path d="M2.8 3 L4.6 4.6 L2.8 6.2 M5 7.2 H8" fill="none" stroke="#9a9a9a" stroke-width="0.9"/></svg>
<div class="t" style="left:40px;top:442.5px;color:#d0d0d0;font-size:12.8px;">Checked command status</div>
<svg style="left:22px;top:475px" width="6" height="10" viewBox="0 0 6 10"><path d="M1 1 L5 5 L1 9" fill="none" stroke="#9a9a9a" stroke-width="1.2"/></svg>
<div class="t" style="left:40px;top:472px;color:#9a9a9a;font-size:13px;">Thought for 1s</div>
<div class="a" style="left:16px;top:489px;width:485px;height:122px;border-radius:8px;border:1px solid #2b2b2b"></div>
<div class="t" style="left:25px;top:499.5px;color:#e6e6e6;font-size:12.4px;font-weight:bold">Committing Changes</div>
<div class="t" style="left:25px;top:519.8px;color:#d4d4d4;font-size:13px;">Staging modified and untracked files, committing them, and pushing to GitHub.</div>
<div class="a" style="left:17px;top:546px;width:483px;height:1px;background:#2b2b2b"></div>
<div class="t" style="left:25px;top:556.5px;color:#8a8a8a;font-size:12.5px;">Progress Updates</div>
<div class="t" style="left:393px;top:556.5px;width:81px;text-align:right;color:#9a9a9a;font-size:12.4px">Expand all</div>
<svg style="left:482px;top:560.0px" width="5" height="9" viewBox="0 0 5 9"><path d="M4.3 0.7 L0.8 4.5 L4.3 8.3" fill="none" stroke="#9a9a9a" stroke-width="1"/></svg>
<div class="t" style="left:27px;top:583px;color:#8a8a8a;font-size:10px;">1</div>
<div class="t" style="left:45px;top:584.8px;color:#e6e6e6;font-size:12.45px;font-weight:bold">Staging and committing changes</div>
<div class="a" style="left:16px;top:619px;width:485px;height:201px;border-radius:8px;border:1px solid #2b2b2b"></div>
<div class="t" style="left:25px;top:629.4px;color:#e6e6e6;font-size:12.5px;font-weight:bold">Verification and Walkthrough</div>
<div class="t" style="left:25px;top:649.4px;color:#d4d4d4;font-size:12.8px;">Successfully staged changes, committed them with a descriptive message, and</div>
<div class="a" style="left:215px;top:670px;width:98px;height:18px;border-radius:4px;background:#2e2e2e"></div>
<div class="t" style="left:25px;top:670.5px;color:#d4d4d4;font-size:13px;">pushed to the remote repository</div>
<div class="t" style="left:219px;top:669.5px;color:#d4d4d4;font-family:'Liberation Mono',monospace;font-size:10.6px;line-height:18px">PiAir/MOVEL-AI</div>
<div class="t" style="left:314px;top:670.5px;color:#d4d4d4;font-size:12.8px;">.</div>
<div class="a" style="left:17px;top:697px;width:483px;height:1px;background:#2b2b2b"></div>
<div class="t" style="left:25px;top:708px;color:#8a8a8a;font-size:12.5px;">Files Edited</div>
<svg style="left:28px;top:731px" width="13" height="14" viewBox="0 0 13 14"><circle cx="3" cy="2.8" r="2" fill="none" stroke="#cfcfcf" stroke-width="1"/><path d="M3 4.8 V13 M8 1.5 L6.5 3 L8 4.5 M6.5 3 H8.5 Q10 3 10 4.5 V9" fill="none" stroke="#cfcfcf" stroke-width="1"/><circle cx="10" cy="11" r="2" fill="none" stroke="#cfcfcf" stroke-width="1"/></svg>
<div class="t" style="left:43px;top:730px;color:#e6e6e6;font-size:12.6px;font-weight:bold">Walkthrough</div>
<div class="a" style="left:17px;top:755px;width:483px;height:1px;background:#2b2b2b"></div>
<div class="t" style="left:25px;top:765.6px;color:#8a8a8a;font-size:12.5px;">Progress Updates</div>
<div class="t" style="left:393px;top:765.6px;width:81px;text-align:right;color:#9a9a9a;font-size:12.4px">Expand all</div>
<svg style="left:482px;top:769.1px" width="5" height="9" viewBox="0 0 5 9"><path d="M4.3 0.7 L0.8 4.5 L4.3 8.3" fill="none" stroke="#9a9a9a" stroke-width="1"/></svg>
<div class="t" style="left:27px;top:792px;color:#8a8a8a;font-size:10px;">1</div>
<div class="t" style="left:45px;top:793.5px;color:#e6e6e6;font-size:12.48px;font-weight:bold">Creating walkthrough artifact and notifying user</div>
<div class="a" style="left:16px;top:828px;width:485px;height:34px;overflow:hidden"><div style="position:absolute;left:0;top:0;width:485px;height:80px;border-radius:8px;border:1px solid #2b2b2b"></div></div>
<div class="a" style="left:16px;top:828px;width:485px;height:34px;overflow:hidden"><div class="t" style="left:9px;top:12.299999999999955px;color:#d4d4d4;font-size:13px">I've updated the repository with your changes. All modified and untracked files</div></div>
<div class="a" style="left:312px;top:861px;width:43px;height:1px;background:#888"></div>
<svg style="left:24px;top:869px" width="12" height="14" viewBox="0 0 12 14"><path d="M1.5 0.6 H7.5 L11.4 4.5 V12.4 Q11.4 13.4 10.4 13.4 H1.6 Q0.6 13.4 0.6 12.4 V1.6 Q0.6 0.6 1.5 0.6 Z M7.5 0.6 V4.5 H11.4" fill="none" stroke="#8a8a8a" stroke-width="1"/></svg>
<svg style="left:47px;top:869px" width="14" height="14" viewBox="0 0 14 14"><rect x="0.6" y="0.6" width="12.8" height="12.8" rx="1" fill="none" stroke="#8a8a8a" stroke-width="1"/><path d="M3 3.5 L5.5 5.5 L3 7.5 M6 8.8 H10" fill="none" stroke="#8a8a8a" stroke-width="1"/></svg>
<svg style="left:71px;top:869px" width="15" height="14" viewBox="0 0 15 14"><path d="M0.6 6.5 L3 1 H12 L14.4 6.5 V12 Q14.4 13 13.4 13 H1.6 Q0.6 13 0.6 12 Z M0.6 6.5 H4.5 L5.5 8.5 H9.5 L10.5 6.5 H14.4 M3.5 3.8 H11.5" fill="none" stroke="#8a8a8a" stroke-width="1"/></svg>
<div class="a" style="left:78px;top:876px;width:8px;height:8px;border-radius:50%;background:#0a84ff"></div>
<svg style="left:95px;top:869px" width="14" height="14" viewBox="0 0 14 14"><circle cx="7" cy="7" r="6.4" fill="none" stroke="#8a8a8a" stroke-width="1"/><circle cx="7" cy="7" r="2.6" fill="none" stroke="#8a8a8a" stroke-width="1"/><path d="M7 4.4 H13 M4.8 8.3 L1.9 3.2 M9.2 8.3 L6.3 13.4" stroke="#8a8a8a" stroke-width="1"/></svg>
<div class="a" style="left:8px;top:891px;width:510px;height:74px;border-radius:9px;background:#212123;border:1px solid #2e2e30"></div>
<div class="t" style="left:21px;top:905.5px;color:#7c7c7c;font-size:13px;">Ask anything, @ to mention, / for workflows</div>
<svg style="left:22px;top:942px" width="11" height="11" viewBox="0 0 11 11"><path d="M5.5 0.5 V10.5 M0.5 5.5 H10.5" stroke="#8a8a8a" stroke-width="1.1"/></svg>
<svg style="left:48px;top:944px" width="8" height="5" viewBox="0 0 8 5"><path d="M0.8 4.2 L4 1 L7.2 4.2" fill="none" stroke="#aaa" stroke-width="1"/></svg>
<div class="t" style="left:63px;top:939.5px;color:#b8b8b8;font-size:10.8px;">Planning</div>
<svg style="left:120px;top:944px" width="8" height="5" viewBox="0 0 8 5"><path d="M0.8 4.2 L4 1 L7.2 4.2" fill="none" stroke="#aaa" stroke-width="1"/></svg>
<div class="t" style="left:135px;top:939.5px;color:#b8b8b8;font-size:10.6px;">Gemini 3 Flash</div>
<svg style="left:466px;top:939px" width="12" height="16" viewBox="0 0 12 16"><rect x="3.2" y="0.6" width="5.6" height="9.5" rx="2.8" fill="none" stroke="#c8c8c8" stroke-width="1.1"/><path d="M1 7.5 Q1 12 6 12 Q11 12 11 7.5 M6 12 V15" fill="none" stroke="#c8c8c8" stroke-width="1.1"/><path d="M4.5 3 V8" stroke="#c8c8c8" stroke-width="0.8"/></svg>
<div class="a" style="left:488px;top:935px;width:24px;height:24px;border-radius:50%;background:#2c2c2e"></div>
<svg style="left:494px;top:941px" width="12" height="12" viewBox="0 0 12 12"><path d="M0.8 6 H11 M6.5 1.5 L11 6 L6.5 10.5" fill="none" stroke="#8a8a8a" stroke-width="1.2"/></svg>
</div>
<!-- STATUS BAR -->
<div id="status" class="a" style="left:0;top:1010px;width:1911px;height:17px;background:#181818;overflow:hidden">
<div class="a" style="left:0;top:0;width:1911px;height:1px;background:#2b2b2b"></div>
<div class="a" style="left:0;top:0;width:36px;height:17px;background:#0078d4"></div>
<svg style="left:14px;top:6px" width="12" height="13" viewBox="0 0 12 13"><path d="M1 5.5 L4.8 9.2 L1 13 M11 0.6 L7.2 4.3 L11 8" fill="none" stroke="#fff" stroke-width="1.2"/></svg>
<div class="t" style="left:47px;top:3px;color:#cccccc;font-size:12px;">master*</div>
<svg style="left:94px;top:3px" width="17" height="14" viewBox="0 0 17 14"><path d="M3 6 A5.5 5.5 0 0 1 13.5 4.5 M14 8 A5.5 5.5 0 0 1 3.5 9.5" fill="none" stroke="#cccccc" stroke-width="1.2"/><path d="M13.8 1.5 V5 H10.3 M3.2 12.5 V9 H6.7" fill="none" stroke="#cccccc" stroke-width="1.2"/></svg>
<svg style="left:127px;top:3px" width="15" height="15" viewBox="0 0 15 15"><circle cx="7.5" cy="7.5" r="6.6" fill="none" stroke="#cccccc" stroke-width="1.1"/><path d="M5 5 L10 10 M10 5 L5 10" stroke="#cccccc" stroke-width="1.1"/></svg>
<div class="t" style="left:145px;top:3px;color:#cccccc;font-size:12px;">0</div>
<svg style="left:156px;top:3px" width="15" height="14" viewBox="0 0 15 14"><path d="M7.5 1 L14 13 H1 Z" fill="none" stroke="#cccccc" stroke-width="1.1" stroke-linejoin="round"/><path d="M7.5 5 V9.2 M7.5 10.5 V11.6" stroke="#cccccc" stroke-width="1.2"/></svg>
<div class="t" style="left:174.5px;top:3px;color:#cccccc;font-size:12px;">0</div>
<div class="t" style="left:197px;top:3px;color:#cccccc;font-size:11.6px;">Quarto: 1.8.27</div>
<div class="t" style="left:1230px;top:3px;color:#cccccc;font-size:12px;">R: (not attached)</div>
<svg style="left:1336px;top:2px" width="10" height="16" viewBox="0 0 10 16"><circle cx="5" cy="8" r="3.2" fill="none" stroke="#cccccc" stroke-width="1.3"/><path d="M5 0 V4.8 M5 11.2 V16" stroke="#cccccc" stroke-width="1.3"/></svg>
<div class="t" style="left:1352.5px;top:3px;color:#cccccc;font-size:12px;">Not Committed Yet</div>
<div class="t" style="left:1471px;top:3px;color:#cccccc;font-size:12px;">Ln 7, Col 47</div>
<div class="t" style="left:1547.5px;top:3px;color:#cccccc;font-size:12px;">Spaces: 4</div>
<div class="t" style="left:1613px;top:3px;color:#cccccc;font-size:12px;">UTF-8</div>
<div class="t" style="left:1661px;top:3px;color:#cccccc;font-size:12px;">LF</div>
<div class="t" style="left:1689px;top:3px;color:#cccccc;font-size:12px;letter-spacing:-0.5px">{ }</div>
<div class="t" style="left:1710.5px;top:3px;color:#cccccc;font-size:12px;">Quarto</div>
<div class="t" style="left:1763.5px;top:3px;color:#cccccc;font-size:12px;">Antigravity - Settings</div>
<svg style="left:1893px;top:1px" width="15" height="16" viewBox="0 0 15 16"><path d="M2 12 Q3.5 10.5 3.5 7 Q3.5 2.5 7.5 2.5 Q9 2.5 10 3.3 M11.5 7 Q11.5 10.5 13 12 Z M2 12 H13 M6 14 Q7.5 15.5 9 14" fill="none" stroke="#cccccc" stroke-width="1.2"/><circle cx="12" cy="3.5" r="2.6" fill="#ffffff"/></svg>
</div>
</body></html>
